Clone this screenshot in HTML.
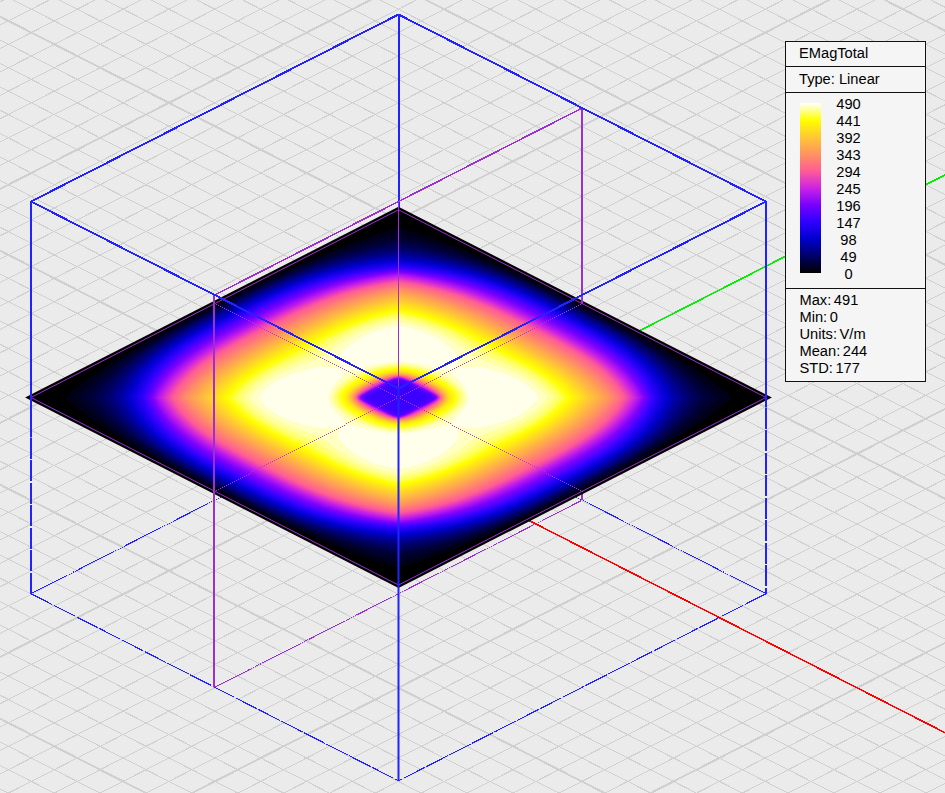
<!DOCTYPE html>
<html><head><meta charset="utf-8"><title>EMagTotal</title>
<style>
html,body{margin:0;padding:0;background:#ebebeb;overflow:hidden}
#v{position:relative;width:945px;height:793px;overflow:hidden;font-family:"Liberation Sans",sans-serif;font-size:14.67px;color:#000}
.lg{position:absolute;left:785px;top:41px;width:139px;height:339px;border:1px solid #111;background:#f5f5f5}
.hl{position:absolute;left:0;width:139px;height:1px;background:#111}
.t{position:absolute;white-space:nowrap;line-height:16px}
  .n{position:absolute;left:32.5px;width:60px;text-align:center;line-height:16px}
.cb{position:absolute;left:14px;top:61px;width:21px;height:170px}
</style></head><body><div id="v">
<svg width="945" height="793" viewBox="0 0 945 793" style="display:block;position:absolute;left:0;top:0">
<rect width="945" height="793" fill="#ebebeb"/>
<path d="M0 -474.79L945 7.29M0 -427.99L945 54.09M0 -404.59L945 77.49M0 1.79L945 -480.29M0 -381.19L945 100.89M0 25.19L945 -456.89M0 -357.79L945 124.29M0 48.59L945 -433.49M0 -334.39L945 147.69M0 71.99L945 -410.09M0 -310.99L945 171.09M0 95.39L945 -386.69M0 -287.59L945 194.49M0 118.79L945 -363.29M0 -264.19L945 217.89M0 142.19L945 -339.89M0 -240.79L945 241.29M0 165.59L945 -316.49M0 -193.99L945 288.09M0 212.39L945 -269.69M0 -170.59L945 311.49M0 235.79L945 -246.29M0 -147.19L945 334.89M0 259.19L945 -222.89M0 -123.79L945 358.29M0 282.59L945 -199.49M0 -100.39L945 381.69M0 305.99L945 -176.09M0 -76.99L945 405.09M0 329.39L945 -152.69M0 -53.59L945 428.49M0 352.79L945 -129.29M0 -30.19L945 451.89M0 376.19L945 -105.89M0 -6.79L945 475.29M0 399.59L945 -82.49M0 40.01L945 522.09M0 446.39L945 -35.69M0 63.41L945 545.49M0 469.79L945 -12.29M0 86.81L945 568.89M0 493.19L945 11.11M0 110.21L945 592.29M0 516.59L945 34.51M0 133.61L945 615.69M0 539.99L945 57.91M0 157.01L945 639.09M0 563.39L945 81.31M0 180.41L945 662.49M0 586.79L945 104.71M0 203.81L945 685.89M0 610.19L945 128.11M0 227.21L945 709.29M0 633.59L945 151.51M0 274.01L945 756.09M0 680.39L945 198.31M0 297.41L945 779.49M0 703.79L945 221.71M0 320.81L945 802.89M0 727.19L945 245.11M0 344.21L945 826.29M0 750.59L945 268.51M0 367.61L945 849.69M0 773.99L945 291.91M0 391.01L945 873.09M0 797.39L945 315.31M0 414.41L945 896.49M0 820.79L945 338.71M0 437.81L945 919.89M0 844.19L945 362.11M0 461.21L945 943.29M0 867.59L945 385.51M0 508.01L945 990.09M0 914.39L945 432.31M0 531.41L945 1013.49M0 937.79L945 455.71M0 554.81L945 1036.89M0 961.19L945 479.11M0 578.21L945 1060.29M0 984.59L945 502.51M0 601.61L945 1083.69M0 1007.99L945 525.91M0 625.01L945 1107.09M0 1031.39L945 549.31M0 648.41L945 1130.49M0 1054.79L945 572.71M0 671.81L945 1153.89M0 1078.19L945 596.11M0 695.21L945 1177.29M0 1101.59L945 619.51M0 742.01L945 1224.09M0 1148.39L945 666.31M0 765.41L945 1247.49M0 1171.79L945 689.71M0 788.81L945 1270.89M0 1195.19L945 713.11M0 1218.59L945 736.51M0 1241.99L945 759.91M0 1265.39L945 783.31" stroke="#d0d0d0" stroke-width="1.0" fill="none" shape-rendering="crispEdges"/>
<path d="M0 -451.39L945 30.69M0 -217.39L945 264.69M0 188.99L945 -293.09M0 16.61L945 498.69M0 422.99L945 -59.09M0 250.61L945 732.69M0 656.99L945 174.91M0 484.61L945 966.69M0 890.99L945 408.91M0 718.61L945 1200.69M0 1124.99L945 642.91" stroke="#d0d0d0" stroke-width="2.0" fill="none" shape-rendering="crispEdges"/>
<line x1="398.30" y1="453.80" x2="955.00" y2="737.79" stroke="#ff0000" stroke-width="1.55" shape-rendering="crispEdges" />
<line x1="398.30" y1="453.80" x2="955.00" y2="169.81" stroke="#00f000" stroke-width="1.6" shape-rendering="crispEdges" />
<line x1="31.00" y1="593.70" x2="398.50" y2="406.50" stroke="#2222ff" stroke-width="1" shape-rendering="crispEdges" stroke-dasharray="40 1 1 1 1 1 1 1 1 1 1 1 1 1"/>
<line x1="766.00" y1="593.70" x2="398.50" y2="406.50" stroke="#2222ff" stroke-width="1" shape-rendering="crispEdges" stroke-dasharray="40 1 1 1 1 1 1 1 1 1 1 1 1 1"/>
<line x1="31.00" y1="593.70" x2="398.50" y2="780.80" stroke="#2222ff" stroke-width="1.1" shape-rendering="crispEdges" stroke-dasharray="24 1.5"/>
<line x1="766.00" y1="593.70" x2="398.50" y2="780.80" stroke="#2222ff" stroke-width="1.1" shape-rendering="crispEdges" stroke-dasharray="24 1.5"/>
<line x1="214.75" y1="687.25" x2="582.25" y2="500.10" stroke="#9a30d0" stroke-width="1" shape-rendering="crispEdges" stroke-dasharray="40 1 1 1 1 1 1 1 1 1 1 1 1 1"/>
<line x1="582.25" y1="108.00" x2="582.25" y2="500.10" stroke="#9a30d0" stroke-width="1.6" shape-rendering="crispEdges" />
<rect x="398" y="14.5" width="2" height="392.0" fill="#2222ff"/>
<polygon points="25.12,397.50 398.50,206.80 771.88,397.50 398.50,588.00" fill="#000" />
<g shape-rendering="geometricPrecision">
<path d="M147.9 341.0L180.1 323.5L235.1 295.3L269.2 278.3L298.0 264.9L324.5 253.4L352.2 242.6L382.3 232.2L397.6 227.5L399.4 227.5L419.2 233.7L439.4 240.6L460.5 248.6L480.9 256.9L500.7 265.6L524.7 276.8L580.3 304.7L634.9 333.1L656.9 345.3L673.9 355.4L690.2 365.8L705.8 376.6L719.4 386.9L731.4 397.1L731.4 397.9L720.6 407.1L709.6 415.6L698.1 423.8L675.2 438.7L649.1 454.0L616.9 471.5L561.9 499.7L527.8 516.7L499.0 530.1L472.5 541.6L444.8 552.4L414.7 562.8L399.4 567.5L397.6 567.5L377.8 561.3L357.6 554.4L336.5 546.4L316.1 538.1L296.3 529.4L272.3 518.2L216.7 490.3L162.1 461.9L140.1 449.7L123.1 439.6L106.8 429.2L91.2 418.4L77.6 408.1L65.6 397.9L65.6 397.1L76.4 387.9L87.4 379.4L98.9 371.2L121.8 356.3Z" fill="#000019" fill-rule="evenodd"/>
<path d="M160.2 336.3L193.9 318.1L252.2 288.4L283.9 273.4L312.2 261.2L331.4 253.8L347.7 248.1L366.6 242.1L384.4 237.1L397.7 233.7L399.3 233.7L408.6 236.0L426.5 240.9L443.7 246.2L462.1 252.5L481.4 259.8L500.0 267.5L516.3 274.8L560.2 296.2L619.7 326.8L640.3 338.2L655.9 347.4L673.5 358.7L687.6 368.7L700.7 379.2L711.7 389.3L719.3 397.1L719.3 397.9L708.5 408.8L694.9 420.6L677.4 433.6L660.0 445.0L636.8 458.7L603.1 476.9L544.8 506.6L513.1 521.6L484.8 533.8L465.6 541.2L449.3 546.9L430.4 552.9L412.6 557.9L399.3 561.3L397.7 561.3L388.4 559.0L370.5 554.1L353.3 548.8L334.9 542.5L315.6 535.2L297.0 527.5L280.7 520.2L236.8 498.8L177.3 468.2L156.7 456.8L141.1 447.6L123.5 436.3L109.4 426.3L96.3 415.8L85.3 405.7L77.7 397.9L77.7 397.1L88.5 386.2L102.1 374.4L119.6 361.4L137.0 350.0Z" fill="#000029" fill-rule="evenodd"/>
<path d="M165.5 335.1L204.6 314.1L242.9 294.6L266.4 283.2L284.1 275.0L302.5 267.2L318.1 261.1L334.3 255.3L351.3 249.9L367.0 245.4L398.5 238.0L413.6 241.3L430.0 245.4L449.6 251.0L468.2 257.2L487.7 264.4L504.6 271.4L524.2 280.2L543.2 289.2L600.0 318.1L637.0 338.3L652.4 347.6L663.1 354.6L673.4 361.9L684.2 370.5L693.2 378.4L701.6 386.6L710.9 397.5L700.6 409.4L687.7 421.6L672.1 434.0L653.8 446.5L631.5 459.9L592.4 480.9L554.1 500.4L530.6 511.8L512.9 520.0L494.5 527.8L478.9 533.9L462.7 539.7L445.7 545.1L430.0 549.6L398.5 557.0L383.4 553.7L367.0 549.6L347.4 544.0L328.8 537.8L309.3 530.6L292.4 523.6L272.8 514.8L253.8 505.8L197.0 476.9L160.0 456.7L144.6 447.4L133.9 440.4L123.6 433.1L112.8 424.5L103.8 416.6L95.4 408.4L86.1 397.5L96.4 385.6L109.3 373.4L124.9 361.0L143.2 348.5Z" fill="#000039" fill-rule="evenodd"/>
<path d="M167.1 335.8L183.3 326.7L204.4 315.6L244.3 295.3L267.8 283.9L287.4 275.1L304.3 268.1L318.5 262.8L337.0 256.6L366.7 248.4L397.0 242.0L400.0 242.0L413.3 244.5L440.5 251.0L456.2 255.5L473.1 260.9L490.9 267.5L509.6 275.1L527.6 283.1L545.0 291.5L600.2 319.6L631.2 336.6L654.5 351.2L666.0 359.4L674.4 366.1L684.5 375.0L691.6 382.3L698.2 389.9L703.2 396.7L703.2 398.3L698.2 405.1L691.6 412.7L685.5 419.0L670.9 431.8L661.0 439.3L651.9 445.6L629.9 459.2L613.7 468.3L592.6 479.4L552.7 499.7L529.2 511.1L509.6 519.9L492.7 526.9L478.5 532.2L460.0 538.4L430.3 546.6L400.0 553.0L397.0 553.0L383.7 550.5L356.5 544.0L340.8 539.5L323.9 534.1L306.1 527.5L287.4 519.9L269.4 511.9L252.0 503.5L196.8 475.4L165.8 458.4L142.5 443.8L131.0 435.6L122.6 428.9L112.5 420.0L105.4 412.7L98.8 405.1L93.8 398.3L93.8 396.7L98.8 389.9L105.4 382.3L111.5 376.0L126.1 363.2L136.0 355.7L145.1 349.4Z" fill="#00004a" fill-rule="evenodd"/>
<path d="M166.3 337.8L183.1 328.2L204.1 317.0L242.4 297.5L267.5 285.3L285.5 277.3L302.5 270.3L318.6 264.5L335.5 259.0L350.4 254.8L365.7 251.0L380.9 247.8L397.3 244.9L399.7 244.9L416.1 247.8L443.7 254.0L459.6 258.4L474.7 263.2L491.0 269.0L508.2 275.9L524.7 283.1L542.2 291.3L591.4 316.2L624.1 333.9L647.6 348.5L657.9 355.8L667.5 363.4L675.3 370.3L682.6 377.6L690.8 387.2L697.4 396.9L697.4 398.1L696.0 400.4L690.8 407.8L684.5 415.3L677.5 422.7L669.8 429.7L661.6 436.4L651.5 443.8L630.7 457.2L613.9 466.8L592.9 478.0L554.6 497.5L529.5 509.7L511.5 517.7L494.5 524.7L478.4 530.5L461.5 536.0L446.6 540.2L431.3 544.0L416.1 547.2L399.7 550.1L397.3 550.1L380.9 547.2L353.3 541.0L337.4 536.6L322.3 531.8L306.0 526.0L288.8 519.1L272.3 511.9L254.8 503.7L205.6 478.8L172.9 461.1L149.4 446.5L139.1 439.2L129.5 431.6L121.7 424.7L114.4 417.4L106.2 407.8L99.6 398.1L99.6 396.9L101.0 394.6L106.2 387.2L112.5 379.7L119.5 372.3L127.2 365.3L135.4 358.6L145.5 351.2Z" fill="#00005a" fill-rule="evenodd"/>
<path d="M190.4 325.5L252.9 293.5L273.7 283.7L292.0 275.9L311.3 268.5L331.8 261.8L351.7 256.4L373.1 251.6L398.5 247.4L400.9 247.7L421.7 251.2L442.1 255.6L463.3 261.3L482.1 267.3L497.1 272.8L511.8 278.7L540.9 292.0L597.8 320.8L614.1 329.6L628.5 338.0L648.6 351.1L657.3 357.6L665.4 364.4L672.9 371.5L679.8 379.0L685.3 386.0L689.7 392.7L692.5 397.5L689.7 402.3L685.3 409.0L679.8 416.0L673.9 422.4L667.6 428.6L656.1 438.3L642.1 448.4L627.0 457.9L606.6 469.5L544.1 501.5L523.3 511.3L505.0 519.1L485.7 526.5L465.2 533.2L445.3 538.6L423.9 543.4L398.5 547.6L396.1 547.3L375.3 543.8L354.9 539.4L333.7 533.7L314.9 527.7L299.9 522.2L285.2 516.3L256.1 503.0L199.2 474.2L182.9 465.4L168.5 457.0L148.4 443.9L139.7 437.4L131.6 430.6L124.1 423.5L117.2 416.0L111.7 409.0L107.3 402.3L104.5 397.5L107.3 392.7L111.7 386.0L117.2 379.0L123.1 372.6L129.4 366.4L140.9 356.7L154.9 346.6L170.0 337.1Z" fill="#00006b" fill-rule="evenodd"/>
<path d="M185.6 329.5L208.1 317.5L246.4 298.0L266.9 288.1L284.9 280.1L303.9 272.6L322.2 266.3L339.8 261.2L358.4 256.7L380.6 252.4L397.3 249.9L399.7 249.9L418.7 252.8L438.6 256.7L457.2 261.2L474.8 266.3L501.8 276.0L531.7 288.8L552.1 298.7L584.4 315.1L618.6 333.6L639.2 346.5L648.2 352.9L656.6 359.5L664.4 366.5L670.6 372.7L676.2 379.2L681.3 386.0L687.0 395.6L687.6 396.9L687.6 398.1L681.3 409.0L673.5 419.1L662.3 430.5L648.2 442.1L631.2 453.8L611.4 465.5L588.9 477.5L550.6 497.0L530.1 506.9L512.1 514.9L493.1 522.4L474.8 528.7L457.2 533.8L438.6 538.3L416.4 542.6L399.7 545.1L397.3 545.1L378.3 542.2L358.4 538.3L339.8 533.8L322.2 528.7L295.2 519.0L265.3 506.2L244.9 496.3L212.6 479.9L178.4 461.4L157.8 448.5L148.8 442.1L140.4 435.5L132.6 428.5L126.4 422.3L120.8 415.8L115.7 409.0L110.0 399.4L109.4 398.1L109.4 396.9L115.7 386.0L123.5 375.9L134.7 364.5L148.8 352.9L165.8 341.2Z" fill="#00007a" fill-rule="evenodd"/>
<path d="M183.5 332.2L204.8 320.5L241.5 301.7L263.4 291.0L281.3 283.0L300.2 275.4L318.3 269.0L337.8 263.3L354.3 259.3L376.5 255.0L399.0 251.9L418.2 254.6L436.2 257.9L453.2 261.7L473.0 267.2L486.1 271.5L500.4 276.7L528.8 288.8L546.2 297.1L570.8 309.5L595.2 322.1L611.5 331.0L632.4 343.7L641.6 350.0L650.2 356.6L658.2 363.4L664.5 369.6L670.2 376.0L674.6 381.6L679.9 389.8L683.8 397.7L679.2 406.4L673.7 414.5L668.4 421.1L662.4 427.5L650.2 438.4L633.8 450.4L613.5 462.8L592.2 474.5L555.5 493.3L533.6 504.0L515.7 512.0L496.8 519.6L478.7 526.0L459.2 531.7L442.7 535.7L420.5 540.0L398.0 543.1L378.8 540.4L360.8 537.1L343.8 533.3L324.0 527.8L310.9 523.5L296.6 518.3L268.2 506.2L250.8 497.9L226.2 485.5L201.8 472.9L185.5 464.0L164.6 451.3L155.4 445.0L146.8 438.4L138.8 431.6L132.5 425.4L126.8 419.0L122.4 413.4L117.1 405.2L113.2 397.3L117.8 388.6L123.3 380.5L128.6 373.9L134.6 367.5L146.8 356.6L163.2 344.6Z" fill="#00008a" fill-rule="evenodd"/>
<path d="M181.9 334.5L203.1 322.8L236.6 305.5L259.9 293.9L279.4 285.1L296.4 278.1L312.5 272.3L331.6 266.4L347.9 262.3L372.1 257.4L398.6 253.7L417.9 256.3L436.1 259.5L453.2 263.3L469.3 267.6L484.5 272.3L497.1 276.8L511.0 282.3L525.8 288.7L557.3 303.9L604.3 328.4L625.6 341.0L634.9 347.2L643.7 353.6L651.9 360.4L658.4 366.4L664.4 372.8L668.9 378.3L675.2 387.6L680.2 397.5L676.6 405.0L673.0 411.0L668.0 417.8L662.5 424.4L650.8 435.6L642.5 442.3L634.9 447.8L615.1 460.5L593.9 472.2L560.4 489.5L537.1 501.1L517.6 509.9L500.6 516.9L484.5 522.7L465.4 528.6L449.1 532.7L424.9 537.6L398.4 541.3L379.1 538.7L360.9 535.5L343.8 531.7L327.7 527.4L312.5 522.7L299.9 518.2L286.0 512.7L271.2 506.3L239.7 491.1L192.7 466.6L171.4 454.0L162.1 447.8L153.3 441.4L145.1 434.6L138.6 428.6L132.6 422.2L128.1 416.7L121.8 407.4L116.8 397.5L120.4 390.0L124.0 384.0L129.0 377.2L134.5 370.6L146.2 359.4L154.5 352.7L162.1 347.2Z" fill="#000099" fill-rule="evenodd"/>
<path d="M180.4 336.9L196.9 327.4L219.5 315.5L253.3 298.4L275.7 287.9L292.5 280.9L310.3 274.3L327.4 269.0L343.6 264.7L356.3 261.9L372.1 259.0L386.4 256.9L399.0 255.5L417.9 257.9L434.0 260.6L451.4 264.2L465.6 267.9L479.2 271.9L493.9 276.9L507.9 282.2L521.3 287.9L551.4 302.2L598.6 326.6L621.6 339.9L638.6 351.6L646.9 358.2L653.5 364.2L659.6 370.5L664.2 376.0L671.4 386.4L676.7 397.3L675.0 401.8L671.6 408.2L667.6 414.5L662.4 421.2L656.6 427.7L650.3 433.8L642.2 440.6L634.8 446.2L616.6 458.1L600.1 467.6L577.5 479.5L543.7 496.6L521.3 507.1L504.5 514.1L486.7 520.7L469.6 526.0L453.4 530.3L440.7 533.1L424.9 536.0L410.6 538.1L398.0 539.5L379.1 537.1L363.0 534.4L345.6 530.8L331.4 527.1L317.8 523.1L303.1 518.1L289.1 512.8L275.7 507.1L245.6 492.8L198.4 468.4L175.4 455.1L158.4 443.4L150.1 436.8L143.5 430.8L137.4 424.5L132.8 419.0L125.6 408.6L120.3 397.7L122.0 393.2L125.4 386.8L129.4 380.5L134.6 373.8L140.4 367.3L146.7 361.2L154.8 354.4L162.2 348.8Z" fill="#0000a9" fill-rule="evenodd"/>
<path d="M205.1 324.3L240.6 306.0L262.4 295.2L281.9 286.4L299.1 279.5L319.3 272.7L337.0 267.6L356.1 263.3L376.7 259.7L399.1 257.1L427.4 260.8L445.3 264.2L464.0 268.7L481.5 273.8L499.6 280.2L524.9 290.7L553.3 304.4L597.4 327.2L610.5 334.6L623.0 342.3L639.5 354.2L646.5 360.0L652.9 366.1L657.8 371.4L663.1 378.1L667.0 383.9L670.9 391.2L673.5 397.8L670.4 405.0L667.0 411.1L662.3 418.0L657.8 423.6L651.9 429.9L640.7 439.9L627.0 450.0L611.9 459.5L591.9 470.7L556.4 489.0L534.6 499.8L515.1 508.6L497.9 515.5L477.7 522.3L460.0 527.4L440.9 531.7L420.3 535.3L397.9 537.9L369.6 534.2L351.7 530.8L333.0 526.3L315.5 521.2L297.4 514.8L272.1 504.3L243.7 490.6L199.6 467.8L186.5 460.4L174.0 452.7L157.5 440.8L150.5 435.0L144.1 428.9L139.2 423.6L133.9 416.9L130.0 411.1L126.1 403.8L123.5 397.2L126.6 390.0L130.0 383.9L134.7 377.0L139.2 371.4L145.1 365.1L156.3 355.1L170.0 345.0L185.1 335.5Z" fill="#0000b9" fill-rule="evenodd"/>
<path d="M196.8 330.0L217.3 319.1L252.6 301.2L271.7 292.1L288.3 285.0L305.8 278.3L322.7 272.8L340.8 268.0L360.2 263.8L383.7 260.2L398.1 258.6L400.8 258.8L423.0 261.5L443.5 265.1L464.4 270.0L485.7 276.4L510.4 285.6L536.5 297.3L584.2 321.5L612.1 336.9L629.5 348.4L643.9 359.8L650.2 365.9L655.1 371.2L659.5 376.8L664.2 383.8L668.1 391.2L670.7 397.7L665.6 408.8L662.0 414.7L657.8 420.4L653.2 425.9L647.1 432.2L634.5 442.9L619.0 453.8L600.2 465.0L579.7 475.9L544.4 493.8L525.3 502.9L508.7 510.0L491.2 516.7L474.3 522.2L456.2 527.0L436.8 531.2L413.3 534.8L398.9 536.4L396.2 536.2L374.0 533.5L353.5 529.9L332.6 525.0L311.3 518.6L286.6 509.4L260.5 497.7L212.8 473.5L184.9 458.1L167.5 446.6L153.1 435.2L146.8 429.1L141.9 423.8L137.5 418.2L132.8 411.2L128.9 403.8L126.3 397.3L131.4 386.2L135.0 380.3L139.2 374.6L143.8 369.1L149.9 362.8L162.5 352.1L178.0 341.2Z" fill="#0000c8" fill-rule="evenodd"/>
<path d="M192.5 333.8L212.5 322.9L247.6 304.8L268.0 294.9L284.5 287.7L301.8 280.9L318.4 275.3L336.1 270.3L353.1 266.4L376.0 262.5L398.5 259.9L418.6 262.2L439.5 265.6L458.8 269.8L478.6 275.3L504.0 284.2L529.0 294.9L573.9 317.3L603.7 333.4L621.7 344.5L636.7 355.6L648.7 366.7L653.5 372.1L658.6 378.9L664.2 388.5L668.0 397.5L664.2 406.5L659.4 415.0L655.2 420.7L650.6 426.2L644.5 432.4L637.9 438.4L623.0 449.6L604.5 461.2L584.5 472.1L549.4 490.2L529.0 500.1L512.5 507.3L495.2 514.1L478.6 519.7L460.9 524.7L443.9 528.6L421.0 532.5L398.5 535.1L378.4 532.8L357.5 529.4L338.2 525.2L318.4 519.7L293.0 510.8L268.0 500.1L223.1 477.7L193.3 461.6L175.3 450.5L160.3 439.4L148.3 428.3L143.5 422.9L138.4 416.1L132.8 406.5L129.0 397.5L132.8 388.5L137.6 380.0L141.8 374.3L146.4 368.8L152.5 362.6L159.1 356.6L174.0 345.4Z" fill="#0500d2" fill-rule="evenodd"/>
<path d="M189.9 336.7L209.2 325.9L238.1 310.9L261.3 299.3L280.7 290.5L297.8 283.5L314.1 277.8L331.5 272.6L348.2 268.6L373.1 264.1L399.0 261.2L419.1 263.5L437.8 266.4L457.3 270.6L473.4 274.9L486.6 279.0L499.2 283.5L524.5 294.1L554.3 308.6L596.7 330.7L616.4 342.5L631.8 353.5L644.1 364.4L650.0 370.7L654.4 376.3L661.1 387.0L665.5 397.2L663.5 403.0L659.7 410.5L655.2 417.6L650.9 423.2L646.2 428.6L639.9 434.7L633.0 440.6L625.6 446.2L607.1 458.3L587.8 469.1L558.9 484.1L535.7 495.7L516.3 504.5L499.2 511.5L482.9 517.2L465.5 522.4L448.8 526.4L423.9 530.9L398.0 533.8L377.9 531.5L359.2 528.6L339.7 524.4L323.6 520.1L310.4 516.0L297.8 511.5L272.5 500.9L242.7 486.4L200.3 464.3L180.6 452.5L165.2 441.5L152.9 430.6L147.0 424.3L142.6 418.7L135.9 408.0L131.5 397.8L133.5 392.0L137.3 384.5L141.8 377.4L146.1 371.8L150.8 366.4L157.1 360.3L164.0 354.4L171.4 348.8Z" fill="#0c00da" fill-rule="evenodd"/>
<path d="M187.9 339.3L203.0 330.5L224.0 319.3L256.2 303.0L278.6 292.5L295.5 285.5L311.7 279.7L327.0 275.0L343.3 270.8L356.3 268.1L372.4 265.4L389.6 263.2L399.6 262.5L417.3 264.4L436.2 267.3L451.6 270.4L468.0 274.5L492.6 282.2L518.4 292.5L545.4 305.3L589.6 328.1L611.1 340.6L626.8 351.3L639.5 362.0L645.7 368.3L650.3 373.7L654.4 379.4L658.0 385.4L661.0 391.7L663.0 396.9L662.5 399.4L659.3 407.1L655.9 413.2L652.0 419.0L646.6 425.7L640.6 432.0L634.0 438.0L626.8 443.7L617.9 450.1L609.1 455.7L594.0 464.5L573.0 475.7L540.8 492.0L518.4 502.5L501.5 509.5L485.3 515.3L470.0 520.0L453.7 524.2L440.7 526.9L424.6 529.6L407.4 531.8L397.4 532.5L379.7 530.6L360.8 527.7L345.4 524.6L329.0 520.5L304.4 512.8L278.6 502.5L251.6 489.7L207.4 466.9L185.9 454.4L170.2 443.7L157.5 433.0L151.3 426.7L146.7 421.3L142.6 415.6L139.0 409.6L136.0 403.3L134.0 398.1L134.5 395.6L137.7 387.9L141.1 381.8L145.0 376.0L150.4 369.3L156.4 363.0L163.0 357.0L170.2 351.3L179.1 344.9Z" fill="#1300e2" fill-rule="evenodd"/>
<path d="M207.0 329.6L228.2 318.4L260.5 302.1L278.2 293.9L295.0 286.8L313.0 280.4L330.4 275.2L349.1 270.7L367.0 267.3L381.4 265.3L397.4 263.6L415.6 265.3L434.6 268.1L454.3 272.1L472.6 276.8L491.4 282.9L513.9 291.7L539.6 303.6L584.0 326.3L608.5 340.3L625.5 352.0L638.1 362.7L647.9 373.4L652.0 379.1L655.6 385.1L659.2 392.6L660.8 396.9L660.8 398.1L658.1 405.0L655.0 411.2L651.2 417.1L647.0 422.7L637.1 433.3L624.3 444.0L608.5 454.7L590.0 465.4L568.8 476.6L536.5 492.9L518.8 501.1L502.0 508.2L484.0 514.6L466.6 519.8L447.9 524.3L430.0 527.7L415.6 529.7L399.6 531.4L381.4 529.7L362.4 526.9L342.7 522.9L324.4 518.2L305.6 512.1L283.1 503.3L257.4 491.4L213.0 468.7L188.5 454.7L171.5 443.0L158.9 432.3L149.1 421.6L145.0 415.9L141.4 409.9L137.8 402.4L136.2 398.1L136.2 396.9L138.9 390.0L142.0 383.8L145.8 377.9L150.0 372.3L159.9 361.7L172.7 351.0L188.5 340.3Z" fill="#1a00ea" fill-rule="evenodd"/>
<path d="M201.0 334.2L220.2 323.7L253.9 306.5L271.2 298.1L287.7 290.9L303.3 284.8L319.9 279.2L337.8 274.3L354.9 270.5L375.8 267.1L398.5 264.6L421.2 267.1L442.1 270.5L461.2 274.8L480.9 280.4L504.2 288.8L529.0 299.6L572.2 321.3L598.9 335.8L616.7 347.1L630.2 357.4L636.8 363.4L641.8 368.7L646.4 374.1L650.5 379.9L655.2 388.4L658.8 397.5L655.2 406.6L649.7 416.3L645.5 422.0L640.9 427.4L635.7 432.6L629.0 438.6L614.1 449.7L596.0 460.8L576.8 471.3L543.1 488.5L525.8 496.9L509.3 504.1L493.7 510.2L477.1 515.8L459.2 520.7L442.1 524.5L421.2 527.9L398.5 530.4L375.8 527.9L354.9 524.5L335.8 520.2L316.1 514.6L292.8 506.2L268.0 495.4L224.8 473.7L198.1 459.2L180.3 447.9L166.8 437.6L160.2 431.6L155.2 426.3L150.6 420.9L146.5 415.1L141.8 406.6L138.2 397.5L141.8 388.4L147.3 378.7L151.5 373.0L156.1 367.6L161.3 362.4L168.0 356.4L182.9 345.3Z" fill="#2100f2" fill-rule="evenodd"/>
<path d="M197.4 337.6L216.9 326.7L247.4 311.0L267.6 301.0L285.5 292.9L301.0 286.8L317.4 281.1L333.1 276.5L349.8 272.6L374.9 268.2L389.8 266.4L399.4 265.7L419.7 267.9L438.4 270.8L455.7 274.5L473.8 279.3L497.8 287.4L523.0 298.0L560.3 316.5L593.4 334.0L611.5 345.0L625.4 355.2L632.2 361.0L637.5 366.2L642.3 371.5L646.6 377.1L652.4 386.7L656.7 397.0L656.7 398.0L654.7 403.2L650.4 412.0L646.6 417.9L642.3 423.5L637.5 428.8L631.1 435.0L624.2 440.8L616.7 446.4L599.6 457.4L580.1 468.3L549.6 484.0L529.4 494.0L511.5 502.1L496.0 508.2L479.6 513.9L463.9 518.5L447.2 522.4L422.1 526.8L407.2 528.6L397.6 529.3L377.3 527.1L358.6 524.2L341.3 520.5L323.2 515.7L299.2 507.6L274.0 497.0L236.7 478.5L203.6 461.0L185.5 450.0L171.6 439.8L164.8 434.0L159.5 428.8L154.7 423.5L150.4 417.9L144.6 408.3L140.3 398.0L140.3 397.0L142.3 391.8L146.6 383.0L150.4 377.1L154.7 371.5L159.5 366.2L165.9 360.0L172.8 354.2L180.3 348.6Z" fill="#2800fa" fill-rule="evenodd"/>
<path d="M195.0 340.3L210.6 331.3L231.7 320.2L262.5 304.6L283.4 295.0L298.7 288.7L314.9 282.9L330.4 278.3L346.9 274.2L371.6 269.7L388.8 267.5L399.5 266.7L418.1 268.7L434.7 271.2L452.3 274.7L468.6 278.8L493.0 286.7L516.9 296.4L543.8 309.3L586.4 331.3L604.9 342.2L620.5 353.0L633.1 363.7L638.1 369.0L642.7 374.5L646.7 380.2L650.3 386.2L654.8 397.0L654.8 398.0L653.7 401.1L650.3 408.8L646.7 414.8L642.7 420.5L638.1 426.0L632.0 432.3L625.3 438.2L618.0 443.9L602.0 454.7L586.4 463.7L565.3 474.8L534.5 490.4L513.6 500.0L498.3 506.3L482.1 512.1L466.6 516.7L450.1 520.8L425.4 525.3L408.2 527.5L397.5 528.3L378.9 526.3L362.3 523.8L344.7 520.3L328.4 516.2L304.0 508.3L280.1 498.6L253.2 485.7L210.6 463.7L192.1 452.8L176.5 442.0L163.9 431.3L158.9 426.0L154.3 420.5L150.3 414.8L146.7 408.8L142.2 398.0L142.2 397.0L143.3 393.9L146.7 386.2L150.3 380.2L154.3 374.5L158.9 369.0L165.0 362.7L171.7 356.8L179.0 351.1Z" fill="#3100ff" fill-rule="evenodd"/>
<path d="M216.8 329.3L268.4 303.0L286.3 294.9L301.7 288.7L320.0 282.4L337.7 277.4L354.7 273.5L373.0 270.4L398.1 267.5L424.0 270.4L442.3 273.5L459.3 277.4L477.0 282.4L495.3 288.7L517.3 297.8L542.6 309.9L582.2 330.3L595.3 337.7L606.4 344.5L621.7 355.5L628.6 361.3L633.9 366.5L638.7 371.8L643.0 377.4L646.8 383.3L650.1 389.5L653.1 397.3L651.7 401.7L648.8 408.0L645.4 414.1L641.4 419.9L635.8 426.4L625.2 436.6L613.0 446.0L598.1 455.6L580.2 465.7L528.6 492.0L510.7 500.1L495.3 506.3L477.0 512.6L459.3 517.6L442.3 521.5L424.0 524.6L398.9 527.5L373.0 524.6L354.7 521.5L337.7 517.6L320.0 512.6L301.7 506.3L279.7 497.2L254.4 485.1L214.8 464.7L201.7 457.3L190.6 450.5L175.3 439.5L168.4 433.7L163.1 428.5L158.3 423.2L154.0 417.6L150.2 411.7L146.9 405.5L143.9 397.7L145.3 393.3L148.2 387.0L151.6 380.9L155.6 375.1L161.2 368.6L171.8 358.4L184.0 349.0L198.9 339.4Z" fill="#3c00ff" fill-rule="evenodd"/>
<path d="M209.6 334.4L228.1 324.6L261.8 307.4L279.3 299.1L294.2 292.7L310.1 286.7L327.0 281.3L343.1 277.0L360.5 273.3L386.6 269.5L397.2 268.4L402.8 268.7L422.6 271.1L443.2 274.6L462.1 279.1L481.4 284.8L502.8 292.7L527.3 303.6L572.0 326.1L596.9 340.0L613.0 350.5L626.2 361.0L636.5 371.4L640.9 376.9L644.8 382.8L649.3 391.4L651.4 396.8L651.4 398.2L646.9 408.6L640.9 418.1L636.5 423.6L631.6 428.9L620.1 439.1L605.2 449.8L587.4 460.6L568.9 470.4L535.2 487.6L517.7 495.9L502.8 502.3L486.9 508.3L470.0 513.7L453.9 518.0L436.5 521.7L410.4 525.5L399.8 526.6L394.2 526.3L374.4 523.9L353.8 520.4L334.9 515.9L315.6 510.2L294.2 502.3L269.7 491.4L225.0 468.9L200.1 455.0L184.0 444.5L170.8 434.0L160.5 423.6L156.1 418.1L152.2 412.2L147.7 403.6L145.6 398.2L145.6 396.8L150.1 386.4L156.1 376.9L160.5 371.4L165.4 366.1L176.9 355.9L191.8 345.2ZM370.7 395.8L369.6 396.8L369.6 398.2L370.7 399.2L392.0 410.2L397.2 412.2L400.4 412.1L403.4 410.9L426.3 399.2L427.4 398.2L427.4 396.8L426.3 395.8L405.0 384.8L399.8 382.8L396.6 382.9L393.6 384.1Z" fill="#4800ff" fill-rule="evenodd"/>
<path d="M206.1 337.8L224.8 327.6L258.4 310.4L275.7 302.0L292.1 294.7L307.7 288.6L322.5 283.6L338.2 279.2L355.1 275.3L378.0 271.4L398.9 269.1L419.0 271.4L437.5 274.4L456.8 278.6L474.5 283.6L497.7 291.8L521.3 302.0L563.1 322.8L590.0 337.3L606.6 347.6L621.5 358.7L632.3 368.8L637.0 374.2L641.3 379.9L646.2 388.3L650.0 397.3L646.8 405.5L642.0 413.9L637.9 419.7L633.3 425.1L622.7 435.3L615.5 441.1L607.9 446.6L590.9 457.2L572.2 467.4L538.6 484.6L521.3 493.0L504.9 500.3L489.3 506.4L474.5 511.4L458.8 515.8L441.9 519.7L419.0 523.6L398.1 525.9L378.0 523.6L359.5 520.6L340.2 516.4L322.5 511.4L299.3 503.2L275.7 493.0L233.9 472.2L207.0 457.7L190.4 447.4L175.5 436.3L164.7 426.2L160.0 420.8L155.7 415.1L150.8 406.7L147.0 397.7L150.2 389.5L155.0 381.1L159.1 375.3L163.7 369.9L174.3 359.7L181.5 353.9L189.1 348.4ZM366.3 395.1L364.5 397.4L365.2 398.8L366.3 399.9L392.3 413.2L394.0 414.0L398.2 414.8L401.1 414.5L404.7 413.2L430.7 399.9L432.5 397.6L431.8 396.2L430.7 395.1L404.7 381.8L403.0 381.0L398.8 380.2L395.9 380.5L392.3 381.8Z" fill="#5400ff" fill-rule="evenodd"/>
<path d="M204.1 340.4L223.1 329.8L250.5 315.7L270.6 305.7L288.4 297.5L303.7 291.3L320.0 285.5L335.4 280.9L352.0 276.8L376.9 272.3L391.6 270.5L399.7 269.9L417.7 272.0L434.0 274.6L451.4 278.3L467.5 282.6L491.5 290.6L515.2 300.4L543.5 314.1L584.3 335.5L602.6 346.5L617.9 357.4L629.0 367.4L633.9 372.7L638.4 378.2L644.3 387.7L648.4 396.9L648.4 398.1L646.8 402.3L642.3 410.9L638.4 416.8L633.9 422.3L623.7 432.7L610.5 443.2L592.9 454.6L573.9 465.2L546.5 479.3L526.4 489.3L508.6 497.5L493.3 503.7L477.0 509.5L461.6 514.1L445.0 518.2L420.1 522.7L405.4 524.5L397.3 525.1L379.3 523.0L363.0 520.4L345.6 516.7L329.5 512.4L305.5 504.4L281.8 494.6L253.5 480.9L212.7 459.5L194.4 448.5L179.1 437.6L168.0 427.6L163.1 422.3L158.6 416.8L152.7 407.3L148.6 398.1L148.6 396.9L150.2 392.7L154.7 384.1L158.6 378.2L163.1 372.7L173.3 362.3L186.5 351.8ZM363.2 396.7L363.2 398.3L367.1 401.0L390.0 412.8L397.1 415.5L400.1 415.5L405.4 413.5L428.5 401.8L433.8 398.3L433.8 396.7L429.9 394.0L407.0 382.2L399.9 379.5L396.9 379.5L391.6 381.5L368.5 393.2Z" fill="#5f00ff" fill-rule="evenodd"/>
<path d="M203.3 342.4L219.9 332.9L241.1 321.8L268.8 307.9L289.7 298.2L305.0 291.9L319.4 286.8L334.7 282.1L350.7 278.1L375.8 273.3L399.0 270.6L416.5 272.6L432.7 275.3L448.0 278.4L464.2 282.7L488.4 290.6L512.2 300.4L539.0 313.3L581.5 335.3L599.9 346.3L614.2 356.2L626.7 367.0L631.7 372.2L636.3 377.7L642.4 387.1L647.1 397.2L645.5 401.7L642.4 407.9L638.7 413.8L634.5 419.5L629.8 424.9L623.5 431.1L610.4 441.6L593.7 452.6L577.1 462.1L555.9 473.2L528.2 487.1L507.3 496.8L492.0 503.1L477.6 508.2L462.3 512.9L446.3 516.9L421.2 521.7L398.0 524.4L380.5 522.4L364.3 519.7L349.0 516.6L332.8 512.3L308.6 504.4L284.8 494.6L258.0 481.7L215.5 459.7L197.1 448.7L182.8 438.8L170.3 428.0L165.3 422.8L160.7 417.3L154.6 407.9L149.9 397.8L151.5 393.3L154.6 387.1L158.3 381.2L162.5 375.5L167.2 370.1L173.5 363.9L186.6 353.4ZM367.9 392.8L365.0 394.4L362.7 396.4L362.2 397.7L363.7 399.6L366.6 401.5L389.3 413.1L392.5 414.6L396.4 415.8L399.0 416.0L404.5 414.6L429.1 402.2L432.0 400.6L434.3 398.6L434.8 397.3L433.3 395.4L430.4 393.5L407.7 381.9L404.5 380.4L400.6 379.2L398.0 379.0L392.5 380.4Z" fill="#6b00ff" fill-rule="evenodd"/>
<path d="M203.3 343.9L218.4 335.2L236.4 325.7L267.1 310.1L287.8 300.4L302.9 294.0L318.5 288.3L334.1 283.3L348.3 279.6L361.1 276.8L374.7 274.3L389.1 272.3L399.4 271.4L415.2 273.3L429.2 275.5L444.5 278.6L458.9 282.2L470.6 285.7L483.5 290.0L507.5 299.6L533.0 311.7L575.7 333.6L595.8 345.2L611.6 356.0L624.3 366.7L629.4 371.9L634.1 377.3L640.5 386.5L645.6 397.0L644.9 399.8L641.9 406.0L638.3 412.0L634.1 417.7L628.9 423.7L623.2 429.4L610.3 440.0L593.7 451.1L578.6 459.8L560.6 469.3L529.9 484.9L509.2 494.6L494.1 501.0L478.5 506.7L462.9 511.7L448.7 515.4L435.9 518.2L422.3 520.7L407.9 522.7L397.6 523.6L381.8 521.7L367.8 519.5L352.5 516.4L338.1 512.8L326.4 509.3L313.5 505.0L289.5 495.4L264.0 483.3L221.3 461.4L201.2 449.8L185.4 439.0L172.7 428.3L167.6 423.1L162.9 417.7L156.5 408.5L151.4 398.0L152.1 395.2L155.1 389.0L158.7 383.0L162.9 377.3L168.1 371.3L173.8 365.6L186.7 355.0ZM363.2 395.1L362.2 396.2L361.5 397.6L362.9 399.7L364.6 400.8L390.5 414.1L394.3 415.7L398.3 416.4L402.7 415.7L406.5 414.1L433.8 399.9L434.8 398.8L435.5 397.4L434.1 395.3L432.4 394.2L406.5 380.9L402.7 379.3L398.7 378.6L394.3 379.3L390.5 380.9Z" fill="#7700ff" fill-rule="evenodd"/>
<path d="M203.8 345.2L218.3 336.8L234.8 328.0L267.0 311.6L287.6 301.8L302.7 295.4L318.5 289.5L333.6 284.6L347.5 280.8L360.2 277.9L373.6 275.4L387.8 273.2L399.3 272.0L414.0 273.9L427.9 276.2L441.1 278.8L455.6 282.4L467.3 285.8L480.3 290.1L504.4 299.6L530.0 311.6L571.2 332.8L591.6 344.3L607.6 354.8L620.8 365.3L627.1 371.5L631.9 376.9L639.2 387.2L644.3 397.1L644.3 397.9L641.3 404.2L637.8 410.2L633.7 415.9L629.1 421.4L622.9 427.6L610.2 438.3L593.2 449.8L578.7 458.2L562.2 467.0L530.0 483.4L509.4 493.2L494.3 499.6L478.5 505.5L463.4 510.4L449.5 514.2L436.8 517.1L423.4 519.6L409.2 521.8L397.7 523.0L383.0 521.1L369.1 518.8L355.9 516.2L341.4 512.6L329.7 509.2L316.7 504.9L292.6 495.4L267.0 483.4L225.8 462.2L205.4 450.7L189.4 440.2L176.2 429.7L169.9 423.5L165.1 418.1L157.8 407.8L152.7 397.9L152.7 397.1L155.7 390.8L159.2 384.8L163.3 379.1L167.9 373.6L174.1 367.4L186.8 356.7ZM361.7 395.9L361.1 397.2L361.6 399.0L365.7 401.7L390.2 414.3L395.4 416.3L397.8 416.6L401.6 416.3L406.8 414.3L429.8 402.6L435.3 399.1L435.9 397.8L435.4 396.0L431.3 393.3L406.8 380.7L401.6 378.7L399.2 378.4L395.4 378.7L390.2 380.7L367.2 392.4Z" fill="#8405fb" fill-rule="evenodd"/>
<path d="M204.5 346.4L218.3 338.4L234.8 329.5L266.9 313.1L287.5 303.3L302.4 296.8L318.1 290.8L333.0 285.9L346.8 282.0L372.6 276.4L389.0 273.8L399.1 272.8L412.8 274.5L426.7 276.8L452.2 282.5L464.0 285.9L477.1 290.2L489.5 294.8L503.0 300.4L528.5 312.4L569.8 333.5L590.1 345.0L606.2 355.6L619.4 366.0L625.7 372.2L630.6 377.5L637.3 386.6L642.9 397.2L642.5 398.6L640.1 403.6L636.5 409.6L632.4 415.3L627.7 420.7L621.6 426.9L608.7 437.6L592.5 448.6L578.7 456.6L562.2 465.5L530.1 481.9L509.5 491.7L494.6 498.2L478.9 504.2L464.0 509.1L450.2 513.0L424.4 518.6L408.0 521.2L397.9 522.2L384.2 520.5L370.3 518.2L344.8 512.5L333.0 509.1L319.9 504.8L307.5 500.2L294.0 494.6L268.5 482.6L227.2 461.5L206.9 450.0L190.8 439.4L177.6 429.0L171.3 422.8L166.4 417.5L159.7 408.4L154.1 397.8L154.5 396.4L156.9 391.4L160.5 385.4L164.6 379.7L169.3 374.3L175.4 368.1L188.3 357.4ZM361.4 395.8L360.7 396.9L360.9 398.6L365.4 401.9L389.9 414.4L395.1 416.4L397.4 416.8L401.9 416.4L407.1 414.4L428.7 403.5L435.6 399.2L436.3 398.1L436.1 396.4L431.6 393.1L407.1 380.6L401.9 378.6L399.6 378.2L395.1 378.6L389.9 380.6L368.3 391.5Z" fill="#910af7" fill-rule="evenodd"/>
<path d="M241.3 327.7L269.9 313.1L288.9 304.0L307.2 296.2L323.2 290.3L340.2 284.9L358.6 280.2L378.4 276.3L397.6 273.5L409.2 274.8L425.4 277.5L438.4 280.2L452.8 283.8L466.4 287.8L479.2 292.2L504.8 302.6L528.6 313.9L568.3 334.3L587.3 344.9L602.2 354.5L615.7 364.8L626.4 375.0L631.1 380.4L635.2 386.1L638.9 392.1L641.3 397.0L640.8 399.2L637.5 405.4L631.1 414.6L623.4 423.2L613.4 432.2L602.2 440.5L590.1 448.4L575.7 456.7L555.7 467.3L527.1 481.9L508.1 491.0L489.8 498.8L473.8 504.7L456.8 510.1L438.4 514.8L418.6 518.7L399.4 521.5L387.8 520.2L371.6 517.5L358.6 514.8L344.2 511.2L330.6 507.2L317.8 502.8L292.2 492.4L268.4 481.1L228.7 460.7L209.7 450.1L194.8 440.5L181.3 430.2L170.6 420.0L165.9 414.6L161.8 408.9L158.1 402.9L155.7 398.0L156.2 395.8L159.5 389.6L165.9 380.4L173.6 371.8L183.6 362.8L194.8 354.5L206.9 346.6L221.3 338.3ZM360.2 396.7L360.2 398.3L361.1 399.4L366.5 402.9L387.9 413.8L393.0 416.0L397.0 417.0L400.0 417.0L402.2 416.6L409.1 413.8L430.5 402.9L434.7 400.3L436.8 398.3L436.8 396.7L435.9 395.6L430.5 392.1L409.1 381.2L404.0 379.0L400.0 378.0L397.0 378.0L394.8 378.4L387.9 381.2L366.5 392.1L362.3 394.7Z" fill="#9f10f3" fill-rule="evenodd"/>
<path d="M231.9 334.0L282.3 308.5L298.5 301.1L313.8 294.9L330.1 289.1L347.5 283.9L366.3 279.4L384.3 276.2L399.0 274.2L424.1 278.1L439.2 281.3L453.5 285.0L468.8 289.7L483.2 294.9L505.0 304.0L530.3 316.2L571.4 337.4L594.2 350.8L609.6 361.6L622.0 372.5L627.0 377.8L631.5 383.3L635.5 389.1L638.9 395.2L640.0 397.7L636.9 403.5L633.6 408.8L626.0 418.3L616.6 427.6L607.2 435.2L595.5 443.4L581.6 451.9L565.1 461.0L514.7 486.5L498.5 493.9L483.2 500.1L466.9 505.9L449.5 511.1L430.7 515.6L412.7 518.8L398.0 520.8L372.9 516.9L357.8 513.7L343.5 510.0L328.2 505.3L313.8 500.1L292.0 491.0L266.7 478.8L225.6 457.6L202.8 444.2L187.4 433.4L175.0 422.5L170.0 417.2L165.5 411.7L161.5 405.9L158.1 399.8L157.0 397.3L160.1 391.5L163.4 386.2L171.0 376.7L180.4 367.4L189.8 359.8L201.5 351.6L215.4 343.1ZM364.7 392.8L360.9 395.5L359.8 396.9L359.9 398.4L362.0 400.5L367.7 403.9L386.0 413.2L392.7 416.1L396.7 417.2L400.3 417.2L406.6 415.3L432.3 402.2L436.1 399.5L437.2 398.1L437.1 396.6L435.0 394.5L429.3 391.1L411.0 381.8L404.3 378.9L400.3 377.8L396.7 377.8L390.4 379.7Z" fill="#ac15ef" fill-rule="evenodd"/>
<path d="M226.5 338.3L277.4 312.2L294.9 304.0L310.0 297.6L325.9 291.6L340.9 286.8L357.0 282.5L374.2 278.8L397.6 275.1L401.8 275.4L420.6 278.4L437.9 282.0L454.1 286.3L471.1 291.6L493.8 300.4L516.5 310.7L561.0 333.3L585.9 347.2L602.1 357.7L615.3 368.1L621.8 374.2L626.6 379.5L631.0 385.1L634.9 390.9L638.3 397.0L638.3 398.0L634.9 404.1L631.0 409.9L626.6 415.5L621.8 420.8L611.9 429.8L599.5 439.1L585.9 447.8L570.5 456.7L519.6 482.8L502.1 491.0L487.0 497.4L471.1 503.4L456.1 508.2L440.0 512.5L422.8 516.2L399.4 519.9L395.2 519.6L376.4 516.6L359.1 513.0L342.9 508.7L325.9 503.4L303.2 494.6L280.5 484.3L236.0 461.7L211.1 447.8L194.9 437.3L181.7 426.9L175.2 420.8L170.4 415.5L166.0 409.9L162.1 404.1L158.7 398.0L158.7 397.0L162.1 390.9L166.0 385.1L170.4 379.5L175.2 374.2L185.1 365.2L197.5 355.9L211.1 347.2ZM361.7 394.4L359.7 396.4L359.4 397.8L360.6 399.7L363.1 401.5L371.9 406.4L387.3 414.1L392.4 416.3L397.8 417.5L402.7 416.9L408.0 414.9L426.6 405.6L435.3 400.6L437.3 398.6L437.6 397.2L436.4 395.3L433.9 393.5L425.1 388.6L409.7 380.9L404.6 378.7L399.2 377.5L394.3 378.1L389.0 380.1L370.4 389.4Z" fill="#b91bea" fill-rule="evenodd"/>
<path d="M221.9 342.3L240.3 332.4L270.9 316.7L286.6 309.1L302.8 301.7L318.2 295.5L334.6 289.8L350.1 285.2L364.6 281.7L382.3 278.2L399.1 275.9L414.7 278.2L430.3 281.2L444.9 284.7L460.5 289.2L482.3 296.9L495.9 302.5L508.9 308.3L552.2 330.0L579.0 344.5L596.9 355.6L610.6 365.8L621.5 375.9L626.3 381.3L630.6 386.9L635.1 394.0L636.8 397.2L636.8 397.8L632.2 405.8L626.3 413.7L617.3 423.2L605.8 433.0L591.6 442.9L575.1 452.7L556.7 462.6L526.1 478.3L510.4 485.9L494.2 493.3L478.8 499.5L462.4 505.2L446.9 509.8L432.4 513.3L414.7 516.8L397.9 519.1L382.3 516.8L366.7 513.8L352.1 510.3L336.5 505.8L314.7 498.1L301.1 492.5L288.1 486.7L244.8 465.0L218.0 450.5L200.1 439.4L186.4 429.2L175.5 419.1L170.7 413.7L166.4 408.1L161.9 401.0L160.2 397.8L160.2 397.2L164.8 389.2L170.7 381.3L179.7 371.8L191.2 362.0L205.4 352.1ZM361.5 394.2L359.4 396.3L358.9 397.6L360.3 399.8L362.8 401.7L371.6 406.6L387.1 414.3L394.0 417.0L398.2 417.7L403.0 417.0L409.9 414.3L426.9 405.8L435.5 400.8L437.6 398.7L438.1 397.4L436.7 395.2L434.2 393.3L425.4 388.4L409.9 380.7L403.0 378.0L398.8 377.3L394.0 378.0L387.1 380.7L370.1 389.2Z" fill="#c620e6" fill-rule="evenodd"/>
<path d="M217.2 346.2L232.4 337.7L252.1 327.5L278.3 314.2L297.4 305.2L310.7 299.5L324.7 294.2L339.6 289.2L355.4 284.8L379.0 279.7L392.9 277.4L399.3 276.7L424.7 280.9L449.7 287.0L474.1 294.8L498.0 304.5L523.4 316.5L567.6 339.3L587.7 351.0L603.4 361.7L616.1 372.4L626.0 383.0L630.9 389.9L635.1 397.1L635.1 397.9L633.8 400.4L629.3 407.5L621.3 417.4L615.0 423.6L609.4 428.6L597.0 437.9L579.8 448.8L564.6 457.3L544.9 467.5L518.7 480.8L499.6 489.8L486.3 495.5L472.3 500.8L457.4 505.8L441.6 510.2L418.0 515.3L404.1 517.6L397.7 518.3L372.3 514.1L347.3 508.0L322.9 500.2L299.0 490.5L273.6 478.5L229.4 455.7L209.3 444.0L193.6 433.3L180.9 422.6L171.0 412.0L166.1 405.1L161.9 397.9L161.9 397.1L163.2 394.6L167.7 387.5L175.7 377.6L182.0 371.4L187.6 366.4L200.0 357.1ZM360.0 395.1L358.6 397.4L359.1 398.9L361.2 400.9L363.9 402.6L374.3 408.3L386.8 414.4L393.7 417.1L398.4 417.9L403.3 417.1L411.8 413.7L428.7 405.1L437.0 399.9L438.4 397.6L437.9 396.1L435.8 394.1L433.1 392.4L422.7 386.7L410.2 380.6L403.3 377.9L398.6 377.1L393.7 377.9L385.2 381.3L368.3 389.9Z" fill="#d127de" fill-rule="evenodd"/>
<path d="M213.2 349.8L226.1 342.3L242.5 333.5L274.7 317.1L293.6 308.0L308.4 301.5L322.3 296.1L335.0 291.6L348.5 287.6L373.5 281.6L397.7 277.5L405.2 278.4L419.1 280.7L442.5 285.9L454.4 289.2L467.5 293.5L491.9 302.9L516.1 314.0L556.0 334.3L578.1 346.4L595.9 357.7L603.5 363.2L610.6 369.0L621.1 379.3L628.1 388.2L633.5 397.1L633.5 397.9L631.9 400.9L628.1 406.8L623.8 412.5L613.9 423.0L601.0 433.7L583.8 445.2L570.9 452.7L554.5 461.5L522.3 477.9L503.4 487.0L488.6 493.5L474.7 498.9L462.0 503.4L448.5 507.4L423.5 513.4L399.3 517.5L391.8 516.6L377.9 514.3L354.5 509.1L342.6 505.8L329.5 501.5L305.1 492.1L280.9 481.0L241.0 460.7L218.9 448.6L201.1 437.3L193.5 431.8L186.4 426.0L175.9 415.7L168.9 406.8L163.5 397.9L163.5 397.1L165.1 394.1L168.9 388.2L173.2 382.5L183.1 372.0L196.0 361.3ZM370.9 388.1L363.7 392.2L359.8 394.9L358.2 397.3L358.8 399.0L362.3 401.9L369.4 406.1L383.3 413.1L391.6 416.7L395.5 417.8L398.1 418.1L403.5 417.3L412.1 413.8L426.1 406.9L433.3 402.8L437.2 400.1L438.8 397.7L438.2 396.0L434.7 393.1L427.6 388.9L413.7 381.9L405.4 378.3L401.5 377.2L398.9 376.9L393.5 377.7L384.9 381.2Z" fill="#d930d2" fill-rule="evenodd"/>
<path d="M231.4 340.5L280.4 315.3L296.3 307.8L311.2 301.4L327.0 295.3L341.8 290.4L357.7 286.0L374.7 282.2L390.7 279.4L399.1 278.4L415.6 280.9L433.1 284.5L449.3 288.7L466.4 294.1L489.2 302.8L511.9 313.1L554.9 334.8L579.9 348.7L596.1 359.2L609.4 369.6L615.8 375.6L620.8 380.9L628.6 391.5L631.9 397.2L631.9 397.8L628.6 403.5L625.2 408.5L620.8 414.1L615.8 419.4L606.0 428.4L594.8 436.8L581.3 445.5L565.6 454.5L516.6 479.7L500.7 487.2L485.8 493.6L470.0 499.7L455.2 504.6L439.3 509.0L422.3 512.8L406.3 515.6L397.9 516.6L381.4 514.1L363.9 510.5L347.7 506.3L330.6 500.9L307.8 492.2L285.1 481.9L242.1 460.2L217.1 446.3L200.9 435.8L187.6 425.4L181.2 419.4L176.2 414.1L168.4 403.5L165.1 397.8L165.1 397.2L168.4 391.5L171.8 386.5L176.2 380.9L181.2 375.6L191.0 366.6L202.2 358.2L215.7 349.5ZM364.8 391.2L360.7 393.8L358.4 396.1L357.9 397.9L359.5 400.2L367.6 405.5L378.2 411.0L389.6 416.1L395.3 417.9L397.7 418.2L401.2 418.0L407.4 416.1L418.8 411.0L432.2 403.8L436.3 401.2L438.6 398.9L439.1 397.1L437.5 394.8L429.4 389.5L418.8 384.0L407.4 378.9L401.7 377.1L399.3 376.8L395.8 377.0L389.6 378.9L378.2 384.0Z" fill="#e139c6" fill-rule="evenodd"/>
<path d="M223.0 346.4L240.1 337.0L269.1 322.1L287.8 312.8L302.3 306.2L316.5 300.2L329.9 295.3L344.9 290.4L358.9 286.6L380.4 282.0L396.8 279.4L399.7 279.3L412.8 281.3L427.6 284.2L452.1 290.4L476.0 298.5L499.6 308.4L527.9 322.1L568.8 343.4L587.1 354.4L601.3 364.4L612.6 374.2L618.1 379.8L622.6 385.3L626.4 390.6L630.1 396.9L630.1 398.1L628.6 400.8L622.6 409.7L614.7 418.8L603.6 428.8L589.8 438.9L574.0 448.6L556.9 458.0L527.9 472.9L509.2 482.2L494.7 488.8L480.5 494.8L467.1 499.7L452.1 504.6L438.1 508.4L416.6 513.0L400.2 515.6L397.3 515.7L384.2 513.7L369.4 510.8L344.9 504.6L321.0 496.5L297.4 486.6L269.1 472.9L228.2 451.6L209.9 440.6L195.7 430.6L184.4 420.8L178.9 415.2L174.4 409.7L170.6 404.4L166.9 398.1L166.9 396.9L168.4 394.2L174.4 385.3L182.3 376.2L193.4 366.2L207.2 356.1ZM363.1 391.9L359.3 394.7L357.9 396.4L357.6 398.1L359.3 400.3L365.8 404.8L377.8 411.2L387.6 415.6L395.0 418.1L397.4 418.4L402.0 418.1L409.4 415.6L422.3 409.6L433.9 403.1L437.7 400.3L439.1 398.6L439.4 396.9L437.7 394.7L431.2 390.2L419.2 383.8L409.4 379.4L402.0 376.9L399.6 376.6L395.0 376.9L387.6 379.4L374.7 385.4Z" fill="#e842b9" fill-rule="evenodd"/>
<path d="M218.7 350.2L232.3 342.4L248.8 333.6L279.5 318.0L298.5 308.9L311.7 303.2L325.6 297.8L340.2 292.8L352.0 289.3L375.0 283.9L398.1 280.1L420.4 283.6L442.6 288.7L466.0 295.8L491.2 305.7L515.9 317.2L555.7 337.6L577.7 349.8L592.6 359.4L600.1 364.9L607.1 370.8L617.3 381.0L623.4 388.8L628.5 397.3L626.4 401.5L622.7 407.2L618.3 412.8L608.0 423.4L595.1 433.8L578.3 444.8L564.7 452.6L548.2 461.4L517.5 477.0L498.5 486.1L485.3 491.8L471.4 497.2L456.8 502.2L445.0 505.7L422.0 511.1L398.9 514.9L376.6 511.4L354.4 506.3L331.0 499.2L305.8 489.3L281.1 477.8L241.3 457.4L219.3 445.2L204.4 435.6L196.9 430.1L189.9 424.2L179.7 414.0L173.6 406.2L168.5 397.7L170.6 393.5L174.3 387.8L178.7 382.2L189.0 371.6L201.9 361.2ZM360.2 393.6L358.0 395.6L357.3 396.8L357.3 398.2L359.0 400.5L362.7 403.3L371.3 408.2L383.8 414.4L392.7 417.7L397.1 418.5L400.2 418.5L404.3 417.7L413.2 414.4L428.7 406.6L436.8 401.4L439.0 399.4L439.7 398.2L439.7 396.8L438.0 394.5L434.3 391.7L425.7 386.8L413.2 380.6L404.3 377.3L399.9 376.5L396.8 376.5L392.7 377.3L383.8 380.6L368.3 388.4Z" fill="#f04bad" fill-rule="evenodd"/>
<path d="M216.5 352.8L229.1 345.4L243.9 337.4L291.7 313.3L318.1 301.7L342.9 293.0L356.7 289.1L368.3 286.3L383.3 283.3L397.2 281.1L399.8 281.1L413.7 283.3L434.3 287.6L455.4 293.4L478.9 301.7L502.1 311.8L530.2 325.6L560.5 341.4L582.1 353.8L591.0 359.8L598.9 365.6L607.4 372.8L613.8 379.2L622.2 389.8L626.5 396.8L626.5 398.2L622.2 405.2L618.5 410.2L613.8 415.8L608.0 421.6L596.4 431.3L580.5 442.2L567.9 449.6L553.1 457.6L505.3 481.7L478.9 493.3L454.1 502.0L440.3 505.9L428.7 508.7L413.7 511.7L399.8 513.9L397.2 513.9L383.3 511.7L362.7 507.4L341.6 501.6L318.1 493.3L294.9 483.2L266.8 469.4L236.5 453.6L214.9 441.2L206.0 435.2L198.1 429.4L189.6 422.2L183.2 415.8L174.8 405.2L170.5 398.2L170.5 396.8L174.8 389.8L178.5 384.8L183.2 379.2L189.0 373.4L200.6 363.7ZM372.5 385.8L365.1 389.8L359.9 393.4L357.7 395.4L357.0 396.6L357.0 398.4L358.7 400.6L363.7 404.3L370.9 408.4L381.8 413.8L392.4 417.8L396.8 418.7L400.2 418.7L404.6 417.8L410.1 416.0L424.5 409.2L431.9 405.2L437.1 401.6L439.3 399.6L440.0 398.4L440.0 396.6L438.3 394.4L433.3 390.7L426.1 386.6L415.2 381.2L404.6 377.2L400.2 376.3L396.8 376.3L392.4 377.2L386.9 379.0Z" fill="#f854a1" fill-rule="evenodd"/>
<path d="M241.1 340.3L288.3 316.2L304.3 308.8L319.5 302.4L336.8 296.1L352.1 291.4L369.2 287.2L384.6 284.1L398.2 282.0L412.4 284.1L427.0 287.0L442.3 290.7L457.8 295.3L469.9 299.5L491.0 308.1L513.4 318.5L556.2 340.4L580.5 354.4L596.3 365.3L606.6 374.1L612.6 380.1L617.2 385.6L620.8 390.6L624.3 396.4L624.8 397.6L621.4 403.4L617.4 409.2L609.8 417.8L602.2 424.8L591.3 433.4L582.1 439.6L569.4 447.2L555.9 454.7L508.7 478.8L492.7 486.2L477.5 492.6L460.2 498.9L444.9 503.6L427.8 507.8L412.4 510.9L398.8 513.0L384.6 510.9L370.0 508.0L354.7 504.3L339.2 499.7L327.1 495.5L306.0 486.9L283.6 476.5L240.8 454.6L216.5 440.6L200.7 429.7L190.4 420.9L184.4 414.9L179.8 409.4L176.2 404.4L172.7 398.6L172.2 397.4L175.6 391.6L179.6 385.8L187.2 377.2L194.8 370.2L205.7 361.6L214.9 355.4L227.6 347.8ZM364.7 389.6L359.5 393.2L356.7 396.5L356.7 398.5L358.4 400.8L362.0 403.6L366.1 406.2L376.6 411.8L386.5 416.1L394.2 418.5L397.6 418.9L400.5 418.9L408.7 416.8L418.8 412.6L432.3 405.4L437.5 401.8L440.3 398.5L440.3 396.5L438.6 394.2L435.0 391.4L430.9 388.8L420.4 383.2L410.5 378.9L402.8 376.5L399.4 376.1L396.5 376.1L388.3 378.2L378.2 382.4Z" fill="#ff5d95" fill-rule="evenodd"/>
<path d="M245.6 339.5L293.0 315.5L309.2 308.1L324.5 301.9L338.9 296.7L354.3 292.1L371.5 287.8L388.4 284.5L399.2 283.0L419.8 286.6L444.7 292.6L458.1 296.7L470.8 301.2L491.1 309.6L513.4 320.1L554.6 341.3L578.6 355.0L593.5 365.2L605.1 374.9L611.0 380.9L615.6 386.4L619.2 391.4L622.8 397.1L622.8 397.9L619.2 403.6L613.4 411.3L606.1 419.1L598.3 426.0L588.7 433.3L578.6 440.0L566.4 447.3L551.4 455.5L504.0 479.5L487.8 486.9L472.5 493.1L458.1 498.3L442.7 502.9L425.5 507.2L408.6 510.5L397.8 512.0L377.2 508.4L352.3 502.4L338.9 498.3L326.2 493.8L305.9 485.4L283.6 474.9L242.4 453.7L218.4 440.0L203.5 429.8L191.9 420.1L186.0 414.1L181.4 408.6L177.8 403.6L174.2 397.9L174.2 397.1L177.8 391.4L183.6 383.7L190.9 375.9L198.7 369.0L208.3 361.7L218.4 355.0L230.6 347.7ZM361.6 391.2L358.1 394.1L356.3 396.3L356.1 397.3L356.3 398.7L357.1 399.9L360.4 402.9L367.1 407.3L379.3 413.5L387.9 417.0L396.2 419.0L399.0 419.1L403.1 418.6L412.6 415.7L425.5 409.7L435.4 403.8L438.9 400.9L440.7 398.7L440.9 397.7L440.7 396.3L439.9 395.1L436.6 392.1L429.9 387.7L417.7 381.5L409.1 378.0L400.8 376.0L398.0 375.9L393.9 376.4L384.4 379.3L371.5 385.3Z" fill="#ff668d" fill-rule="evenodd"/>
<path d="M221.9 354.8L233.8 347.8L248.6 339.8L298.0 314.9L322.7 304.1L347.3 295.5L359.9 291.8L372.4 288.8L397.0 284.2L400.0 284.2L409.2 285.7L429.9 290.0L449.7 295.5L470.8 302.8L492.6 311.9L517.8 324.1L554.4 342.9L575.1 354.8L585.4 361.5L593.1 367.1L601.2 373.8L607.5 379.9L612.4 385.3L616.7 390.9L620.5 396.7L620.5 398.3L616.7 404.1L612.4 409.7L602.6 419.9L590.5 429.9L575.1 440.2L563.2 447.2L548.4 455.2L499.0 480.1L474.3 490.9L449.7 499.5L437.1 503.2L424.6 506.2L400.0 510.8L397.0 510.8L387.8 509.3L367.1 505.0L347.3 499.5L326.2 492.2L304.4 483.1L279.2 470.9L242.6 452.1L221.9 440.2L211.6 433.5L203.9 427.9L195.8 421.2L189.5 415.1L184.6 409.7L180.3 404.1L176.5 398.3L176.5 396.7L180.3 390.9L184.6 385.3L194.4 375.1L206.5 365.1ZM360.0 391.9L356.8 395.0L355.7 397.5L356.8 400.0L361.2 404.0L368.1 408.3L380.5 414.5L389.5 417.7L395.9 419.2L398.6 419.3L403.4 418.8L414.8 415.2L428.9 408.3L437.0 403.1L440.2 400.0L441.3 397.5L440.2 395.0L435.8 391.0L428.9 386.7L416.5 380.5L407.5 377.3L401.1 375.8L398.4 375.7L393.6 376.2L382.2 379.8L368.1 386.7Z" fill="#ff6e84" fill-rule="evenodd"/>
<path d="M227.5 353.5L253.6 339.2L285.8 322.8L303.0 314.4L328.1 303.7L340.6 299.2L353.8 295.0L374.1 289.7L398.2 285.1L414.2 287.8L433.3 292.2L445.1 295.5L458.1 299.7L482.6 309.3L506.6 320.4L544.9 339.9L565.7 351.2L582.3 361.6L596.0 371.7L602.7 377.7L607.8 382.9L613.9 390.2L618.7 397.3L617.2 400.0L609.5 410.2L603.8 416.2L598.2 421.3L584.9 431.7L569.5 441.5L543.4 455.8L511.2 472.2L494.0 480.6L468.9 491.3L456.4 495.8L443.2 500.0L422.9 505.3L398.8 509.9L382.8 507.2L363.7 502.8L351.9 499.5L338.9 495.3L314.4 485.7L290.4 474.6L252.1 455.1L231.3 443.8L214.7 433.4L201.0 423.3L194.3 417.3L189.2 412.1L183.1 404.8L178.3 397.7L179.8 395.0L187.5 384.8L193.2 378.8L198.8 373.7L212.1 363.3ZM364.8 388.1L359.6 391.7L356.5 394.8L355.3 397.3L356.5 400.2L360.8 404.2L367.7 408.6L380.1 414.7L389.1 417.9L393.2 419.0L398.2 419.5L405.9 418.5L416.9 414.7L432.2 406.9L437.4 403.3L440.5 400.2L441.7 397.7L440.5 394.8L436.2 390.8L429.3 386.4L416.9 380.3L407.9 377.1L403.8 376.0L398.8 375.5L391.1 376.5L380.1 380.3Z" fill="#ff777c" fill-rule="evenodd"/>
<path d="M236.1 350.6L252.6 341.8L283.1 326.1L311.5 312.4L324.8 306.7L337.1 302.0L350.0 297.7L363.6 293.7L382.4 289.2L398.9 286.3L418.9 290.1L439.4 295.3L461.7 302.7L485.5 312.4L509.2 323.8L554.9 347.3L573.6 358.2L588.0 368.0L599.7 377.6L609.7 388.2L614.0 393.8L616.4 397.7L612.4 403.5L607.9 409.0L598.6 418.4L588.0 427.0L576.3 435.1L560.9 444.4L544.4 453.2L513.9 468.9L485.5 482.6L472.2 488.3L459.9 493.0L447.0 497.3L433.4 501.3L414.6 505.8L398.1 508.7L378.1 504.9L357.6 499.7L335.3 492.3L311.5 482.6L287.8 471.2L242.1 447.7L223.4 436.8L209.0 427.0L197.3 417.4L187.3 406.8L183.0 401.2L180.6 397.3L184.6 391.5L189.1 386.0L198.4 376.6L209.0 368.0L220.7 359.9ZM361.7 389.6L356.1 394.6L354.9 397.1L355.4 399.2L358.1 402.5L364.4 407.1L376.4 413.4L384.9 416.9L392.9 419.1L397.8 419.7L401.8 419.5L412.1 416.9L423.7 411.9L435.3 405.4L440.9 400.4L442.1 397.9L441.6 395.8L438.9 392.5L432.6 387.9L420.6 381.6L412.1 378.1L404.1 375.9L399.2 375.3L395.2 375.5L384.9 378.1L373.3 383.1Z" fill="#ff8073" fill-rule="evenodd"/>
<path d="M255.6 342.3L302.2 318.7L316.7 312.0L332.0 305.7L348.1 299.9L363.5 295.2L379.9 291.1L395.8 287.9L399.4 287.6L401.7 288.0L427.5 293.6L447.0 299.3L465.0 305.7L483.5 313.4L505.7 324.0L548.5 346.0L570.2 358.3L584.8 368.1L596.7 377.6L606.0 386.9L613.8 397.0L613.8 398.0L611.4 401.4L604.1 410.2L596.7 417.4L588.5 424.2L579.7 430.6L568.8 437.5L555.9 445.0L541.4 452.7L494.8 476.3L480.3 483.0L465.0 489.3L448.9 495.1L433.5 499.8L417.1 503.9L401.2 507.1L397.6 507.4L395.3 507.0L369.5 501.4L350.0 495.7L332.0 489.3L313.5 481.6L291.3 471.0L248.5 449.0L226.8 436.7L212.2 426.9L200.3 417.4L191.0 408.1L183.2 398.0L183.2 397.0L185.6 393.6L192.9 384.8L200.3 377.6L208.5 370.8L217.3 364.4L228.2 357.5L241.1 350.0ZM360.0 390.4L356.7 393.4L355.0 395.6L354.5 396.9L355.0 399.4L358.8 403.7L365.4 408.1L377.6 414.4L384.5 417.1L392.6 419.3L397.4 419.9L402.2 419.7L412.5 417.1L417.7 415.1L425.6 411.3L433.0 407.3L437.0 404.6L440.3 401.6L442.0 399.4L442.5 398.1L442.0 395.6L438.2 391.3L431.6 386.9L419.4 380.6L412.5 377.9L404.4 375.7L399.6 375.1L394.8 375.3L384.5 377.9L379.3 379.9L371.4 383.7L364.0 387.7Z" fill="#ff896b" fill-rule="evenodd"/>
<path d="M230.5 358.2L253.5 345.4L301.0 321.2L323.6 310.8L344.5 302.7L357.6 298.5L369.4 295.1L381.8 292.1L397.2 289.0L399.8 289.0L417.3 292.5L437.5 297.9L457.9 304.7L478.3 313.0L499.1 322.7L543.5 345.4L564.1 356.7L573.8 362.7L582.9 369.0L591.2 375.5L598.1 381.6L607.8 392.3L611.1 396.8L611.1 398.2L603.1 408.2L593.7 417.4L581.6 426.9L566.5 436.8L543.5 449.6L496.0 473.8L473.4 484.2L452.5 492.3L439.4 496.5L427.6 499.9L415.2 502.9L399.8 506.0L397.2 506.0L379.7 502.5L359.5 497.1L339.1 490.3L318.7 482.0L297.9 472.3L253.5 449.6L232.9 438.3L223.2 432.3L214.1 426.0L205.8 419.5L198.9 413.4L189.2 402.7L185.9 398.2L185.9 396.8L193.9 386.8L203.3 377.6L215.4 368.1ZM358.4 391.1L354.6 395.4L354.2 396.8L354.2 398.2L354.6 399.6L356.3 401.8L359.6 404.8L366.5 409.2L378.9 415.3L386.0 418.0L394.5 419.9L402.5 419.9L409.0 418.5L414.7 416.7L429.1 410.0L434.8 406.7L438.6 403.9L442.4 399.6L442.8 398.2L442.8 396.8L442.4 395.4L440.7 393.2L437.4 390.2L430.5 385.8L418.1 379.7L411.0 377.0L402.5 375.1L394.5 375.1L388.0 376.5L382.3 378.3L367.9 385.0L362.2 388.3Z" fill="#ff9163" fill-rule="evenodd"/>
<path d="M236.6 356.7L259.9 344.0L307.6 319.9L330.6 309.7L351.9 301.8L375.4 295.0L397.1 290.4L402.3 290.8L421.6 295.0L441.7 300.7L463.0 308.3L484.6 317.6L509.5 329.9L546.1 348.7L567.8 361.1L577.2 367.3L585.9 373.7L592.9 379.6L599.2 385.7L604.0 391.1L608.4 396.8L608.4 398.2L606.7 400.6L598.2 410.3L588.1 419.5L575.9 428.6L560.4 438.3L537.1 451.0L489.4 475.1L466.4 485.3L445.1 493.2L421.6 500.0L399.9 504.6L394.7 504.2L375.4 500.0L355.3 494.3L334.0 486.7L312.4 477.4L287.5 465.1L250.9 446.3L229.2 433.9L219.8 427.7L211.1 421.3L204.1 415.4L197.8 409.3L193.0 403.9L188.6 398.2L188.6 396.8L190.3 394.4L198.8 384.7L208.9 375.5L221.1 366.4ZM363.2 387.3L358.0 390.9L354.3 395.2L353.7 396.5L353.6 398.0L355.0 400.9L359.2 405.1L364.6 408.6L376.8 414.8L385.6 418.2L391.8 419.7L396.6 420.4L400.4 420.4L405.2 419.7L411.4 418.2L418.5 415.5L426.5 411.8L433.8 407.7L439.0 404.1L442.7 399.8L443.3 398.5L443.4 397.0L442.0 394.1L437.8 389.9L432.4 386.4L420.2 380.2L411.4 376.8L405.2 375.3L400.4 374.6L396.6 374.6L391.8 375.3L385.6 376.8L378.5 379.5L370.5 383.2Z" fill="#ff9a5b" fill-rule="evenodd"/>
<path d="M244.5 354.2L292.4 329.3L315.9 317.8L339.4 307.9L361.4 300.4L379.5 295.5L397.5 291.7L399.5 291.7L409.6 293.7L429.7 298.7L452.3 306.0L476.2 315.6L498.4 326.2L544.3 349.7L563.1 360.4L577.8 370.0L589.8 379.6L600.1 389.9L605.7 397.0L605.7 398.0L597.2 408.3L588.7 416.4L578.7 424.3L567.3 432.1L552.5 440.8L504.6 465.7L481.1 477.2L457.6 487.1L435.6 494.6L417.5 499.5L399.5 503.3L397.5 503.3L387.4 501.3L367.3 496.3L344.7 489.0L320.8 479.4L298.6 468.8L252.7 445.3L233.9 434.6L219.2 425.0L207.2 415.4L196.9 405.1L191.3 398.0L191.3 397.0L199.8 386.7L208.3 378.6L218.3 370.7L229.7 362.9ZM360.0 388.8L356.5 391.7L354.6 393.8L353.2 396.3L353.2 398.7L354.6 401.2L356.5 403.3L362.7 407.9L373.2 413.5L381.5 417.1L389.2 419.4L393.6 420.3L399.0 420.7L403.4 420.3L409.9 419.0L415.5 417.1L422.2 414.3L431.4 409.6L437.0 406.2L440.5 403.3L442.4 401.2L443.8 398.7L443.8 396.3L442.4 393.8L440.5 391.7L434.3 387.1L423.8 381.5L415.5 377.9L407.8 375.6L403.4 374.7L398.0 374.3L393.6 374.7L387.1 376.0L381.5 377.9L374.8 380.7L365.6 385.4Z" fill="#ffa254" fill-rule="evenodd"/>
<path d="M260.0 347.8L306.7 324.1L332.7 312.3L346.7 306.9L359.6 302.6L373.3 298.7L387.9 295.2L397.7 293.2L399.3 293.2L413.4 296.1L425.7 299.2L437.4 302.6L450.3 306.9L469.4 314.4L490.3 324.1L537.8 348.3L558.4 359.6L573.3 369.2L585.6 378.6L595.2 387.8L602.9 397.1L602.9 397.9L601.0 400.4L594.2 408.3L586.7 415.4L579.6 421.2L570.7 427.6L561.2 433.7L537.0 447.2L490.3 470.9L464.3 482.7L450.3 488.1L437.4 492.4L423.7 496.3L409.1 499.8L399.3 501.8L397.7 501.8L383.6 498.9L371.3 495.8L359.6 492.4L346.7 488.1L327.6 480.6L306.7 470.9L259.2 446.7L238.6 435.4L223.7 425.8L211.4 416.4L201.8 407.2L194.1 397.9L194.1 397.1L196.0 394.6L202.8 386.7L210.3 379.6L217.4 373.8L226.3 367.4L235.8 361.3ZM358.3 389.5L354.2 393.6L352.8 396.0L352.5 397.5L353.3 400.2L356.0 403.6L362.3 408.2L374.4 414.5L382.8 418.0L390.9 420.1L395.6 420.8L401.4 420.8L408.3 419.7L412.3 418.6L417.7 416.7L425.8 413.0L433.3 409.0L438.7 405.5L442.8 401.4L444.2 399.0L444.5 397.5L443.7 394.8L441.0 391.4L434.7 386.8L422.6 380.5L414.2 377.0L406.1 374.9L401.4 374.2L395.6 374.2L388.7 375.3L384.7 376.4L379.3 378.3L371.2 382.0L363.7 386.0Z" fill="#ffaa4d" fill-rule="evenodd"/>
<path d="M237.3 362.5L258.1 350.8L303.9 327.3L323.0 318.3L341.5 310.6L354.1 306.0L365.5 302.5L379.5 298.7L392.3 295.8L397.6 294.8L399.4 294.8L409.1 296.7L427.6 301.3L446.6 307.3L465.8 314.7L485.2 323.5L532.9 347.7L553.7 358.9L571.4 370.2L578.9 375.8L585.8 381.6L595.7 391.8L599.7 397.0L599.7 398.0L593.1 406.1L583.5 415.4L572.7 423.9L559.7 432.5L538.9 444.2L493.1 467.7L474.0 476.7L455.5 484.4L442.9 489.0L431.5 492.5L417.5 496.3L404.7 499.2L399.4 500.2L397.6 500.2L387.9 498.3L369.4 493.7L350.4 487.7L331.2 480.3L311.8 471.5L264.1 447.3L243.3 436.1L225.6 424.8L218.1 419.2L211.2 413.4L201.3 403.2L197.3 398.0L197.3 397.0L203.9 388.9L213.5 379.6L224.3 371.1ZM363.3 385.8L357.9 389.3L353.6 393.4L352.3 395.8L351.9 397.2L352.9 400.5L354.5 402.7L356.7 404.8L361.8 408.4L373.9 414.7L382.4 418.3L388.2 419.9L395.1 421.1L399.1 421.3L404.3 420.8L410.8 419.4L418.2 416.9L433.7 409.2L439.1 405.7L443.4 401.6L444.7 399.2L445.1 397.8L444.1 394.5L442.5 392.3L440.3 390.2L435.2 386.6L423.1 380.3L414.6 376.7L408.8 375.1L401.9 373.9L397.9 373.7L392.7 374.2L386.2 375.6L378.8 378.1Z" fill="#ffb247" fill-rule="evenodd"/>
<path d="M243.5 360.9L263.0 350.2L312.1 325.2L331.5 316.4L348.8 309.6L371.5 302.4L383.8 299.3L397.3 296.5L399.7 296.5L415.3 299.8L433.3 304.7L451.8 310.9L470.5 318.5L489.6 327.5L535.5 351.0L554.6 361.6L564.2 367.6L572.0 373.0L579.2 378.7L585.8 384.7L594.5 394.4L596.4 396.9L596.4 398.1L588.9 407.1L579.2 416.3L568.2 424.7L553.5 434.1L534.0 444.8L484.9 469.8L465.5 478.6L448.2 485.4L425.5 492.6L413.2 495.7L399.7 498.5L397.3 498.5L381.7 495.2L363.7 490.3L345.2 484.1L326.5 476.5L307.4 467.5L261.5 444.0L242.4 433.4L232.8 427.4L225.0 422.0L217.8 416.3L211.2 410.3L202.5 400.6L200.6 398.1L200.6 396.9L208.1 387.9L217.8 378.7L228.8 370.3ZM358.6 388.1L354.0 392.0L351.7 395.5L351.4 396.9L351.7 399.5L354.0 403.0L360.0 407.8L368.8 412.7L378.4 417.2L387.7 420.2L394.6 421.4L399.7 421.6L404.8 421.1L411.3 419.7L416.9 417.8L423.6 415.0L432.7 410.3L438.4 406.9L443.0 403.0L445.3 399.5L445.6 398.1L445.3 395.5L443.0 392.0L437.0 387.2L428.2 382.3L418.6 377.8L409.3 374.8L402.4 373.6L397.3 373.4L392.2 373.9L385.7 375.3L380.1 377.2L373.4 380.0L364.3 384.7Z" fill="#ffba40" fill-rule="evenodd"/>
<path d="M250.9 358.7L269.4 348.8L318.7 323.9L338.5 315.3L358.1 308.1L377.6 302.4L397.1 298.1L402.3 298.6L421.4 303.0L444.4 310.0L467.0 318.8L487.7 328.5L530.6 350.4L549.9 360.9L563.6 369.5L576.0 378.8L585.7 387.9L593.1 396.8L593.1 398.2L590.5 401.7L582.7 410.2L572.5 419.1L561.0 427.3L546.1 436.3L527.6 446.2L478.3 471.1L458.5 479.7L438.9 486.9L419.4 492.6L399.9 496.9L394.7 496.4L375.6 492.0L352.6 485.0L330.0 476.2L309.3 466.5L266.4 444.6L247.1 434.1L233.4 425.5L221.0 416.2L211.3 407.1L203.9 398.2L203.9 396.8L206.5 393.3L214.3 384.8L224.5 375.9L236.0 367.7ZM356.9 388.8L352.6 392.8L350.8 396.6L351.2 399.8L352.6 402.2L354.6 404.3L360.9 408.9L373.0 415.2L381.4 418.7L389.4 420.9L394.1 421.7L400.3 421.9L405.4 421.3L411.8 419.9L417.4 418.1L425.6 414.5L434.7 409.7L440.1 406.2L444.4 402.2L446.2 398.4L445.8 395.2L444.4 392.8L442.4 390.7L436.1 386.1L424.0 379.8L415.6 376.3L407.6 374.1L402.9 373.3L396.7 373.1L391.6 373.7L385.2 375.1L379.6 376.9L371.4 380.5L362.3 385.3Z" fill="#ffc239" fill-rule="evenodd"/>
<path d="M261.0 355.1L309.6 330.2L328.6 321.2L350.9 312.2L371.6 305.6L390.3 301.1L397.1 299.7L399.9 299.7L417.3 303.5L433.2 307.9L453.2 314.9L473.2 323.4L492.0 332.6L542.2 358.5L556.4 366.9L569.3 376.0L579.5 384.8L588.2 394.4L590.0 396.8L590.0 398.2L583.6 406.0L575.2 414.2L568.1 420.0L559.1 426.3L548.0 433.2L536.0 439.9L487.4 464.8L468.4 473.8L446.1 482.8L425.4 489.4L406.7 493.9L399.9 495.3L397.1 495.3L379.7 491.5L363.8 487.1L343.8 480.1L323.8 471.6L305.0 462.4L254.8 436.5L240.6 428.1L227.7 419.0L217.5 410.2L208.8 400.6L207.0 398.2L207.0 396.8L213.4 389.0L221.8 380.8L228.9 375.0L237.9 368.7L249.0 361.8ZM364.8 383.4L356.4 388.5L352.1 392.6L350.2 396.3L350.0 397.8L350.6 400.1L353.0 403.5L357.7 407.4L367.8 413.2L377.4 417.7L384.7 420.2L391.1 421.6L398.0 422.2L403.5 422.0L410.3 420.7L416.1 419.0L422.9 416.2L432.2 411.6L440.6 406.5L444.9 402.4L446.8 398.7L447.0 397.2L446.4 394.9L444.0 391.5L439.3 387.6L429.2 381.8L419.6 377.3L412.3 374.8L405.9 373.4L399.0 372.8L393.5 373.0L386.7 374.3L380.9 376.0L374.1 378.8Z" fill="#ffcb32" fill-rule="evenodd"/>
<path d="M243.8 367.1L256.6 359.5L273.1 350.7L316.1 328.9L338.8 318.5L356.4 311.9L375.7 306.1L397.0 301.3L402.3 301.8L419.3 305.6L436.9 310.7L454.8 317.2L471.4 324.3L488.6 332.7L540.4 359.5L557.2 369.6L570.9 379.8L577.2 385.5L582.5 391.1L586.9 396.8L586.9 398.2L580.5 406.0L573.2 413.2L563.7 420.8L553.2 427.9L540.4 435.5L523.9 444.3L480.9 466.1L458.2 476.5L440.6 483.1L421.3 488.9L400.0 493.7L394.7 493.2L377.7 489.4L360.1 484.3L342.2 477.8L325.6 470.7L308.4 462.3L256.6 435.5L239.8 425.4L226.1 415.2L219.8 409.5L214.5 403.9L210.1 398.2L210.1 396.8L216.5 389.0L223.8 381.8L233.3 374.2ZM358.5 386.5L353.5 390.2L351.5 392.3L350.0 394.6L349.3 397.4L349.5 399.0L351.5 402.7L355.9 406.8L362.8 411.1L375.2 417.2L384.1 420.5L390.5 421.9L395.5 422.5L401.5 422.5L408.8 421.5L414.8 419.9L421.8 417.2L429.8 413.5L438.5 408.5L443.5 404.8L445.5 402.7L447.0 400.4L447.7 397.6L447.5 396.0L445.5 392.3L441.1 388.2L434.2 383.9L421.8 377.8L412.9 374.5L406.5 373.1L401.5 372.5L395.5 372.5L388.2 373.5L382.2 375.1L375.2 377.8L367.2 381.5Z" fill="#ffd329" fill-rule="evenodd"/>
<path d="M248.5 366.2L267.4 355.6L314.8 331.3L330.7 323.8L345.8 317.4L367.8 309.9L388.2 304.7L397.0 302.9L400.0 302.9L406.6 304.2L423.3 308.2L440.5 313.5L456.4 319.5L472.8 326.8L525.1 353.2L540.0 361.2L556.7 371.5L564.2 377.0L570.1 381.8L575.4 386.9L580.3 392.2L583.8 396.7L583.8 398.3L577.1 406.4L568.9 414.2L559.2 421.7L548.5 428.8L529.6 439.4L482.2 463.7L466.3 471.2L451.2 477.6L429.2 485.1L408.8 490.3L400.0 492.1L397.0 492.1L390.4 490.8L373.7 486.8L356.5 481.5L340.6 475.5L324.2 468.2L271.9 441.8L257.0 433.8L240.3 423.5L232.8 418.0L226.9 413.2L221.6 408.1L216.7 402.8L213.2 398.3L213.2 396.7L219.9 388.6L228.1 380.8L237.8 373.3ZM355.3 387.9L351.8 390.9L350.0 393.1L348.8 395.6L348.5 397.0L348.8 399.4L350.0 401.9L351.8 404.1L357.9 408.8L366.7 413.7L376.3 418.2L385.5 421.3L392.2 422.6L397.5 423.0L404.8 422.6L411.5 421.3L419.0 418.9L425.6 416.0L436.3 410.5L441.7 407.1L445.2 404.1L447.0 401.9L448.2 399.4L448.5 398.0L448.2 395.6L447.0 393.1L445.2 390.9L439.1 386.2L430.3 381.3L420.7 376.8L411.5 373.7L404.8 372.4L397.5 372.0L392.2 372.4L385.5 373.7L378.0 376.1L371.4 379.0L360.7 384.5Z" fill="#ffdc21" fill-rule="evenodd"/>
<path d="M254.3 364.8L270.8 355.8L319.8 330.8L335.8 323.3L351.2 317.1L362.2 313.3L373.8 309.8L397.0 304.5L400.0 304.5L410.9 306.8L427.2 311.0L444.0 316.4L459.5 322.6L475.6 330.0L526.2 355.8L541.0 363.8L556.0 373.4L563.5 379.0L569.1 383.9L578.1 393.4L580.6 396.8L580.6 398.2L573.8 406.5L565.8 414.1L555.1 422.3L542.7 430.2L526.2 439.2L477.2 464.2L461.2 471.7L445.8 477.9L434.8 481.7L423.2 485.2L400.0 490.5L397.0 490.5L386.1 488.2L369.8 484.0L353.0 478.6L337.5 472.4L321.4 465.0L270.8 439.2L256.0 431.2L241.0 421.6L233.5 416.0L227.9 411.1L218.9 401.6L216.4 398.2L216.4 396.8L223.2 388.5L231.2 380.9L241.9 372.7ZM360.1 384.2L353.4 388.5L349.3 392.7L348.6 393.9L347.7 396.9L347.7 398.4L348.6 401.1L350.1 403.4L352.2 405.5L357.3 409.2L366.0 414.1L379.1 419.9L386.9 422.2L391.4 423.0L397.3 423.5L405.6 423.0L412.1 421.7L419.7 419.2L431.0 414.1L436.9 410.8L443.6 406.5L447.7 402.3L448.4 401.1L449.3 398.1L449.3 396.6L448.4 393.9L446.9 391.6L444.8 389.5L439.7 385.8L431.0 380.9L417.9 375.1L410.1 372.8L405.6 372.0L399.7 371.5L391.4 372.0L384.9 373.3L377.3 375.8L366.0 380.9Z" fill="#ffe419" fill-rule="evenodd"/>
<path d="M263.4 361.7L328.0 328.7L346.2 320.8L362.3 314.9L380.0 309.9L397.1 306.1L399.9 306.1L404.3 307.0L421.1 310.9L440.2 316.8L460.9 325.0L476.8 332.5L525.8 357.5L540.5 365.7L552.8 373.5L562.6 381.0L571.2 389.1L577.5 396.8L577.5 398.2L573.1 403.7L566.0 411.1L556.6 418.8L546.1 425.9L533.6 433.3L469.0 466.3L450.8 474.2L434.7 480.1L417.0 485.1L399.9 488.9L397.1 488.9L392.7 488.0L375.9 484.1L356.8 478.2L336.1 470.0L320.2 462.5L271.2 437.5L256.5 429.3L244.2 421.5L234.4 414.0L225.8 405.9L219.5 398.2L219.5 396.8L223.9 391.3L231.0 383.9L240.4 376.2L250.9 369.1ZM353.8 387.2L350.3 390.1L348.4 392.3L346.6 396.0L346.5 397.5L347.0 400.3L348.4 402.7L350.3 404.9L356.4 409.6L365.1 414.6L376.5 419.7L386.1 422.6L393.0 423.8L398.6 424.0L404.0 423.8L413.0 422.1L420.5 419.7L428.8 416.1L437.8 411.3L443.2 407.8L446.7 404.9L448.6 402.7L450.4 399.0L450.5 397.5L450.0 394.7L448.6 392.3L446.7 390.1L440.6 385.4L431.9 380.4L420.5 375.3L410.9 372.4L404.0 371.2L398.4 371.0L393.0 371.2L384.0 372.9L376.5 375.3L368.2 378.9L359.2 383.7Z" fill="#ffed11" fill-rule="evenodd"/>
<path d="M252.2 370.6L262.9 364.2L274.8 357.8L298.2 346.3L325.4 332.0L343.1 323.9L357.7 318.3L372.1 313.7L390.7 309.1L397.3 307.8L399.7 307.8L416.9 311.5L430.7 315.4L447.0 321.1L462.1 327.5L476.2 334.4L498.8 346.3L531.2 362.6L545.4 371.0L558.1 380.1L563.8 385.0L569.7 391.1L574.3 396.9L574.3 398.1L568.9 404.8L561.6 412.0L553.7 418.3L544.8 424.4L534.1 430.8L522.2 437.2L498.8 448.7L471.6 463.0L453.9 471.1L439.3 476.7L424.9 481.3L406.3 485.9L399.7 487.2L397.3 487.2L380.1 483.5L366.3 479.6L350.0 473.9L334.9 467.5L320.8 460.6L298.2 448.7L265.8 432.4L251.6 424.0L238.9 414.9L233.2 410.0L227.3 403.9L222.7 398.1L222.7 396.9L228.1 390.2L235.4 383.0L243.3 376.7ZM355.4 384.9L349.3 389.6L347.3 391.7L345.9 394.1L345.2 396.6L345.2 398.4L345.9 400.9L347.3 403.3L351.5 407.4L361.1 413.5L370.4 418.1L381.0 422.1L387.1 423.6L394.4 424.6L402.6 424.6L409.9 423.6L417.9 421.5L424.9 418.8L433.0 415.1L441.6 410.1L447.7 405.4L449.7 403.3L451.1 400.9L451.8 398.4L451.8 396.6L451.1 394.1L449.7 391.7L445.5 387.6L435.9 381.5L426.6 376.9L416.0 372.9L409.9 371.4L402.6 370.4L394.4 370.4L387.1 371.4L379.1 373.5L372.1 376.2L364.0 379.9Z" fill="#fff609" fill-rule="evenodd"/>
<path d="M260.2 368.0L273.9 360.5L300.4 347.4L326.0 333.9L338.6 327.9L350.4 322.9L368.5 316.5L388.8 311.2L397.5 309.5L399.5 309.5L406.1 310.8L420.7 314.3L436.0 319.0L450.1 324.3L464.8 330.8L532.0 365.3L547.3 374.7L559.4 384.2L567.5 392.5L571.0 397.0L571.0 398.0L564.6 405.7L557.1 412.8L547.3 420.3L536.8 427.0L523.1 434.5L496.6 447.6L471.0 461.1L458.4 467.1L446.6 472.1L428.5 478.5L408.2 483.8L399.5 485.5L397.5 485.5L390.9 484.2L376.3 480.7L361.0 476.0L346.9 470.7L332.2 464.2L265.0 429.7L249.7 420.3L237.6 410.8L229.5 402.5L226.0 398.0L226.0 397.0L232.4 389.3L239.9 382.2L249.7 374.7ZM355.6 383.4L349.2 388.0L345.3 392.2L344.0 394.7L343.5 397.4L343.7 399.2L344.5 401.6L346.1 403.9L349.2 407.0L357.0 412.4L366.0 417.2L377.9 422.1L385.9 424.3L393.0 425.3L401.3 425.5L408.9 424.7L417.2 422.7L424.4 420.1L434.2 415.7L441.4 411.6L447.8 407.0L451.7 402.8L453.0 400.3L453.5 397.6L453.3 395.8L452.5 393.4L450.9 391.1L447.8 388.0L440.0 382.6L431.0 377.8L419.1 372.9L411.1 370.7L404.0 369.7L395.7 369.5L388.1 370.3L379.8 372.3L372.6 374.9L362.8 379.3Z" fill="#fffe01" fill-rule="evenodd"/>
<path d="M254.1 374.3L264.2 368.0L274.6 362.4L302.6 348.6L329.7 334.2L344.1 327.5L357.8 322.0L371.6 317.4L386.9 313.4L399.2 311.2L414.3 314.4L428.2 318.3L442.8 323.3L456.2 329.0L471.9 336.6L494.4 348.6L525.5 364.0L539.8 372.3L550.2 379.5L556.0 384.3L561.3 389.5L566.6 395.7L567.6 397.2L567.6 397.8L562.2 404.5L557.1 409.7L550.2 415.5L542.9 420.7L532.8 427.0L522.4 432.6L494.4 446.4L467.3 460.8L452.9 467.5L439.2 473.0L425.4 477.6L410.1 481.6L397.8 483.8L382.7 480.6L368.8 476.7L354.2 471.7L340.8 466.0L325.1 458.4L302.6 446.4L271.5 431.0L257.2 422.7L246.8 415.5L241.0 410.7L235.7 405.5L230.4 399.3L229.4 397.8L229.4 397.2L234.8 390.5L239.9 385.3L246.8 379.5ZM355.6 381.8L349.0 386.3L345.6 389.3L343.8 391.4L342.4 393.9L341.6 396.6L341.6 398.4L342.4 401.1L345.6 405.7L349.0 408.7L352.8 411.4L361.3 416.5L374.7 422.2L382.3 424.5L391.4 426.2L399.8 426.5L408.1 425.8L414.7 424.5L424.1 421.5L435.7 416.5L441.4 413.2L448.0 408.7L451.4 405.7L453.2 403.6L454.6 401.1L455.4 398.4L455.4 396.6L454.6 393.9L451.4 389.3L448.0 386.3L444.2 383.6L435.7 378.5L422.3 372.8L414.7 370.5L405.6 368.8L397.2 368.5L388.9 369.2L382.3 370.5L372.9 373.5L361.3 378.5Z" fill="#ffff24" fill-rule="evenodd"/>
<path d="M261.9 371.8L278.4 362.8L305.2 349.9L330.5 336.2L347.9 327.9L361.3 322.7L373.1 318.9L387.3 315.2L398.8 312.9L413.6 316.1L427.0 319.8L440.5 324.5L454.0 330.1L469.6 337.8L491.8 349.9L512.4 359.7L526.1 366.7L538.9 374.3L549.1 381.6L558.0 389.8L562.5 395.1L564.1 397.6L558.0 405.2L551.4 411.5L544.2 417.1L535.1 423.2L518.6 432.2L491.8 445.1L466.5 458.8L449.1 467.1L435.7 472.3L423.9 476.1L409.7 479.8L398.2 482.1L383.4 478.9L370.0 475.2L356.5 470.5L343.0 464.9L327.4 457.2L305.2 445.1L284.6 435.3L270.9 428.3L258.1 420.7L247.9 413.4L239.0 405.2L234.5 399.9L232.9 397.4L239.0 389.8L245.6 383.5L252.8 377.9ZM354.0 381.0L347.4 385.5L342.1 390.6L340.6 392.9L339.6 395.6L339.4 398.0L340.0 400.8L341.3 403.3L344.0 406.6L349.9 411.4L359.7 417.3L371.3 422.3L380.7 425.3L389.6 427.1L397.6 427.7L407.4 427.1L416.3 425.3L423.9 423.0L437.3 417.3L443.0 414.0L449.6 409.5L454.9 404.4L456.4 402.1L457.4 399.4L457.6 397.0L457.0 394.2L455.7 391.7L453.0 388.4L447.1 383.6L437.3 377.7L425.7 372.7L416.3 369.7L407.4 367.9L399.4 367.3L389.6 367.9L380.7 369.7L373.1 372.0L359.7 377.7Z" fill="#ffff4c" fill-rule="evenodd"/>
<path d="M260.3 375.8L269.1 370.5L279.7 365.0L308.8 351.7L333.3 337.6L350.6 329.3L362.6 324.5L374.6 320.6L392.2 316.3L397.1 315.4L399.9 315.4L415.2 318.6L425.1 321.4L437.9 325.8L449.7 330.7L465.2 338.4L488.2 351.7L509.4 361.2L523.5 368.1L535.0 374.7L544.1 381.0L549.2 385.3L555.4 391.6L559.4 396.8L559.4 398.2L555.4 403.4L549.2 409.7L544.1 414.0L536.7 419.2L527.9 424.5L517.3 430.0L488.2 443.3L463.7 457.4L446.4 465.7L434.4 470.5L422.4 474.4L404.8 478.7L399.9 479.6L397.1 479.6L381.8 476.4L371.9 473.6L359.1 469.2L347.3 464.3L331.8 456.6L308.8 443.3L287.6 433.8L273.5 426.9L262.0 420.3L252.9 414.0L247.8 409.7L241.6 403.4L237.6 398.2L237.6 396.8L241.6 391.6L247.8 385.3L252.9 381.0ZM350.9 381.0L343.4 386.5L340.3 389.7L338.7 392.0L337.5 394.5L337.1 397.4L338.0 401.8L339.4 404.2L342.3 407.4L345.7 410.4L350.9 414.0L358.0 418.2L373.3 424.5L383.2 427.2L392.0 428.6L401.5 428.8L409.3 428.0L418.0 426.2L427.3 423.2L439.0 418.2L446.1 414.0L453.6 408.5L456.7 405.3L458.3 403.0L459.5 400.5L459.9 397.6L459.0 393.2L457.6 390.8L454.7 387.6L451.3 384.6L446.1 381.0L439.0 376.8L423.7 370.5L413.8 367.8L405.0 366.4L395.5 366.2L387.7 367.0L379.0 368.8L369.7 371.8L358.0 376.8Z" fill="#ffff74" fill-rule="evenodd"/>
<path d="M267.2 375.4L275.7 370.8L285.1 366.2L313.9 354.3L337.2 339.6L346.1 334.8L355.7 330.3L366.0 326.2L376.0 323.0L388.2 319.9L398.9 318.0L409.4 320.0L421.6 323.2L432.7 326.9L444.6 331.8L461.2 340.5L483.1 354.3L505.3 363.3L518.2 369.2L530.2 375.6L539.5 381.9L548.3 389.8L552.5 394.8L554.2 397.7L550.2 403.0L544.4 409.0L538.1 414.1L529.8 419.6L521.3 424.2L511.9 428.8L483.1 440.7L459.8 455.4L450.9 460.2L441.3 464.7L431.0 468.8L421.0 472.0L408.8 475.1L398.1 477.0L387.6 475.0L375.4 471.8L364.3 468.1L352.4 463.2L335.8 454.5L313.9 440.7L291.7 431.7L278.8 425.8L266.8 419.4L257.5 413.1L248.7 405.2L244.5 400.2L242.8 397.3L246.8 392.0L252.6 386.0L258.9 380.9ZM347.8 381.0L340.5 386.6L337.5 389.8L336.0 392.2L335.0 394.8L334.6 397.3L335.0 400.2L336.0 402.8L338.4 406.3L341.6 409.4L351.8 416.6L356.1 419.2L359.3 420.6L373.3 426.0L383.5 428.6L393.2 429.9L402.2 430.0L411.3 429.0L421.7 426.6L432.6 422.7L440.9 419.2L449.2 414.0L456.5 408.4L459.5 405.2L461.0 402.8L462.0 400.2L462.4 397.7L462.0 394.8L461.0 392.2L458.6 388.7L455.4 385.6L445.2 378.4L440.9 375.8L437.7 374.4L423.7 369.0L413.5 366.4L403.8 365.1L394.8 365.0L385.7 366.0L375.3 368.4L364.4 372.3L356.1 375.8Z" fill="#ffff9b" fill-rule="evenodd"/>
<path d="M268.6 379.4L277.1 374.6L288.5 369.5L299.0 365.5L321.4 358.1L334.5 347.6L342.2 342.2L352.2 336.3L361.6 331.8L372.1 327.8L381.3 325.0L392.5 322.4L397.2 321.5L399.8 321.5L409.8 323.5L421.1 326.6L430.2 329.7L438.6 333.2L447.8 337.9L456.1 343.1L462.5 347.6L475.6 358.1L498.2 365.5L510.7 370.4L522.9 376.2L533.9 383.1L539.7 387.9L543.4 391.8L547.3 396.8L547.3 398.2L543.4 403.2L539.7 407.1L535.1 411.0L528.4 415.6L519.9 420.4L508.5 425.5L498.0 429.5L475.6 436.9L462.5 447.4L454.8 452.8L444.8 458.7L435.4 463.2L424.9 467.2L415.7 470.0L404.5 472.6L399.8 473.5L397.2 473.5L387.2 471.5L375.9 468.4L366.8 465.3L358.4 461.8L349.2 457.1L340.9 451.9L334.5 447.4L321.4 436.9L298.8 429.5L286.3 424.6L274.1 418.8L263.1 411.9L257.3 407.1L253.6 403.2L249.7 398.2L249.7 396.8L253.6 391.8L257.3 387.9L261.9 384.0ZM349.4 377.1L340.6 383.6L335.4 388.8L332.7 393.6L332.0 396.4L332.0 398.6L333.2 402.7L336.4 407.3L343.0 413.3L353.2 420.6L367.5 425.8L379.2 429.2L390.9 431.1L400.7 431.4L411.1 430.5L423.9 427.6L443.8 420.6L447.6 417.9L456.4 411.4L461.6 406.2L464.3 401.4L465.0 398.6L465.0 396.4L463.8 392.3L460.6 387.7L454.0 381.7L443.8 374.4L429.5 369.2L417.8 365.8L406.1 363.9L396.3 363.6L385.9 364.5L373.1 367.4L353.2 374.4Z" fill="#ffffc3" fill-rule="evenodd"/>
<path d="M270.5 384.7L278.3 379.9L288.0 375.5L299.5 371.4L312.2 368.1L321.1 366.7L327.0 366.8L336.9 368.0L342.7 369.7L345.7 371.3L344.8 373.3L336.9 381.7L333.3 386.1L330.3 390.8L328.9 394.8L328.7 398.7L329.3 401.6L331.7 406.6L334.2 410.0L344.8 421.7L345.7 423.7L342.7 425.3L336.9 427.0L332.2 427.8L324.2 428.3L317.1 427.8L302.7 424.5L288.0 419.5L278.3 415.1L270.0 410.0L263.1 404.1L258.5 397.9L258.8 396.5L262.2 392.0L265.2 388.9ZM353.8 342.2L362.5 336.9L372.3 332.5L381.8 329.4L393.1 326.8L399.4 326.0L409.1 327.8L417.3 330.0L429.7 334.7L436.0 337.7L441.6 341.1L451.4 348.6L456.1 353.4L457.9 355.9L458.9 358.0L458.9 359.6L457.8 363.7L456.3 366.0L453.0 369.0L449.9 370.6L445.9 370.1L429.5 366.1L416.3 363.4L406.4 362.2L397.9 361.9L390.6 362.2L380.7 363.4L367.5 366.1L351.1 370.1L347.1 370.6L344.0 369.0L340.7 366.0L338.7 362.4L338.1 359.6L338.1 358.0L339.7 355.0L343.6 350.5L347.8 346.6ZM341.3 428.2L344.0 426.0L347.1 424.4L351.1 424.9L367.5 428.9L380.7 431.6L390.6 432.8L400.9 433.1L409.0 432.6L416.3 431.6L429.5 428.9L445.9 424.9L449.9 424.4L453.0 426.0L456.3 429.0L457.8 431.3L458.9 435.4L458.9 437.0L457.9 439.1L456.1 441.6L451.4 446.4L445.5 451.2L440.2 454.8L432.9 458.8L426.4 461.8L417.3 465.0L409.3 467.1L399.4 469.0L396.6 468.8L383.6 466.1L372.3 462.5L361.0 457.3L351.5 451.2L343.4 444.4L339.7 440.0L338.1 437.0L338.1 435.4L338.7 432.6L339.9 430.1ZM451.6 372.0L451.3 371.3L452.6 370.4L456.1 369.0L464.8 367.2L475.9 366.7L484.8 368.1L498.2 371.6L512.4 376.9L523.0 382.4L527.0 385.0L531.9 389.0L535.8 393.1L538.5 397.1L538.2 398.5L534.9 402.9L529.5 408.1L521.6 413.4L514.0 417.4L503.7 421.5L490.3 425.6L481.8 427.5L475.9 428.3L467.3 428.0L460.1 427.0L454.3 425.3L451.3 423.7L452.2 421.7L460.1 413.3L465.3 406.6L467.7 401.6L468.3 397.8L467.7 393.4L465.3 388.4L460.1 381.7L452.2 373.3Z" fill="#ffffeb" fill-rule="evenodd"/>
</g>
<polygon points="31.00,397.50 398.50,209.80 766.00,397.50 398.50,585.00" fill="none" stroke="#9a30d0" stroke-width="1"/>
<path d="M216 490.5h1M218 489.5h1M220 488.5h1M222 487.5h1M224 486.5h1M226 485.5h1M228 484.5h1M230 483.5h1M232 482.5h1M234 481.5h1M236 480.5h1M238 479.5h1M240 478.5h1M242 477.5h1M244 476.5h1M246 475.5h1M248 474.5h1M250 473.5h1M252 471.5h1M254 470.5h1M256 469.5h1M258 468.5h1M260 467.5h1M262 466.5h1M264 465.5h1M266 464.5h1M268 463.5h1M270 462.5h1M272 461.5h1M274 460.5h1M276 459.5h1M278 458.5h1M280 457.5h1M282 456.5h1M284 455.5h1M286 454.5h1M288 453.5h1M290 452.5h1M292 451.5h1M294 450.5h1M296 449.5h1M298 448.5h1M300 447.5h1M302 446.5h1M304 445.5h1M306 444.5h1M308 443.5h1M310 442.5h1M312 441.5h1M314 440.5h1M316 439.5h1M318 438.5h1M320 437.5h1M322 436.5h1M324 435.5h1M326 434.5h1M328 433.5h1M330 432.5h1M332 431.5h1M334 430.5h1M336 429.5h1M338 428.5h1M340 427.5h1M342 426.5h1M344 425.5h1M346 423.5h1M348 422.5h1M350 421.5h1M352 420.5h1M354 419.5h1M356 418.5h1M358 417.5h1M360 416.5h1M362 415.5h1M364 414.5h1M366 413.5h1M368 412.5h1M370 411.5h1M372 410.5h1M374 409.5h1M376 408.5h1M378 407.5h1M380 406.5h1M382 405.5h1M384 404.5h1M386 403.5h1M388 402.5h1M390 401.5h1M392 400.5h1M394 399.5h1M396 398.5h1M398 397.5h1M400 396.5h1M402 395.5h1M404 394.5h1M406 393.5h1M408 392.5h1M410 391.5h1M412 390.5h1M414 389.5h1M416 388.5h1M418 387.5h1M420 386.5h1M422 385.5h1M424 384.5h1M426 383.5h1M428 382.5h1M430 381.5h1M432 380.5h1M434 379.5h1M436 378.5h1M438 377.5h1M440 376.5h1M442 374.5h1M444 373.5h1M446 372.5h1M448 371.5h1M450 370.5h1M452 369.5h1M454 368.5h1M456 367.5h1M458 366.5h1M460 365.5h1M462 364.5h1M464 363.5h1M466 362.5h1M468 361.5h1M470 360.5h1M472 359.5h1M474 358.5h1M476 357.5h1M478 356.5h1M480 355.5h1M482 354.5h1M484 353.5h1M486 352.5h1M488 351.5h1M490 350.5h1M492 349.5h1M494 348.5h1M496 347.5h1M498 346.5h1M500 345.5h1M502 344.5h1M504 343.5h1M506 342.5h1M508 341.5h1M510 340.5h1M512 339.5h1M514 338.5h1M516 337.5h1M518 336.5h1M520 335.5h1M522 334.5h1M524 333.5h1M526 332.5h1M528 331.5h1M530 330.5h1M532 329.5h1M534 328.5h1M536 327.5h1M538 325.5h1M540 324.5h1M542 323.5h1M544 322.5h1M546 321.5h1M548 320.5h1M550 319.5h1M552 318.5h1M554 317.5h1M556 316.5h1M558 315.5h1M560 314.5h1M562 313.5h1M564 312.5h1M566 311.5h1M568 310.5h1M570 309.5h1M572 308.5h1M574 307.5h1M576 306.5h1M578 305.5h1M580 304.5h1M582 303.5h1" stroke="#a838d8" stroke-width="1" fill="none" shape-rendering="crispEdges"/>
<path d="M216 304.5h1M218 305.5h1M220 306.5h1M222 307.5h1M224 308.5h1M226 309.5h1M228 310.5h1M230 311.5h1M232 312.5h1M234 313.5h1M236 314.5h1M238 315.5h1M240 316.5h1M242 317.5h1M244 318.5h1M246 319.5h1M248 320.5h1M250 321.5h1M252 322.5h1M254 323.5h1M256 324.5h1M258 325.5h1M260 327.5h1M262 328.5h1M264 329.5h1M266 330.5h1M268 331.5h1M270 332.5h1M272 333.5h1M274 334.5h1M276 335.5h1M278 336.5h1M280 337.5h1M282 338.5h1M284 339.5h1M286 340.5h1M288 341.5h1M290 342.5h1M292 343.5h1M294 344.5h1M296 345.5h1M298 346.5h1M300 347.5h1M302 348.5h1M304 349.5h1M306 350.5h1M308 351.5h1M310 352.5h1M312 353.5h1M314 354.5h1M316 355.5h1M318 356.5h1M320 357.5h1M322 358.5h1M324 359.5h1M326 360.5h1M328 361.5h1M330 362.5h1M332 363.5h1M334 364.5h1M336 365.5h1M338 366.5h1M340 367.5h1M342 368.5h1M344 369.5h1M346 370.5h1M348 371.5h1M350 372.5h1M352 373.5h1M354 374.5h1M356 376.5h1M358 377.5h1M360 378.5h1M362 379.5h1M364 380.5h1M366 381.5h1M368 382.5h1M370 383.5h1M372 384.5h1M374 385.5h1M376 386.5h1M378 387.5h1M380 388.5h1M382 389.5h1M384 390.5h1M386 391.5h1M388 392.5h1M390 393.5h1M392 394.5h1M394 395.5h1M396 396.5h1M398 397.5h1M400 398.5h1M402 399.5h1M404 400.5h1M406 401.5h1M408 402.5h1M410 403.5h1M412 404.5h1M414 405.5h1M416 406.5h1M418 407.5h1M420 408.5h1M422 409.5h1M424 410.5h1M426 411.5h1M428 412.5h1M430 413.5h1M432 414.5h1M434 415.5h1M436 416.5h1M438 417.5h1M440 418.5h1M442 419.5h1M444 420.5h1M446 421.5h1M448 422.5h1M450 423.5h1M452 425.5h1M454 426.5h1M456 427.5h1M458 428.5h1M460 429.5h1M462 430.5h1M464 431.5h1M466 432.5h1M468 433.5h1M470 434.5h1M472 435.5h1M474 436.5h1M476 437.5h1M478 438.5h1M480 439.5h1M482 440.5h1M484 441.5h1M486 442.5h1M488 443.5h1M490 444.5h1M492 445.5h1M494 446.5h1M496 447.5h1M498 448.5h1M500 449.5h1M502 450.5h1M504 451.5h1M506 452.5h1M508 453.5h1M510 454.5h1M512 455.5h1M514 456.5h1M516 457.5h1M518 458.5h1M520 459.5h1M522 460.5h1M524 461.5h1M526 462.5h1M528 463.5h1M530 464.5h1M532 465.5h1M534 466.5h1M536 467.5h1M538 468.5h1M540 469.5h1M542 470.5h1M544 471.5h1M546 473.5h1M548 474.5h1M550 475.5h1M552 476.5h1M554 477.5h1M556 478.5h1M558 479.5h1M560 480.5h1M562 481.5h1M564 482.5h1M566 483.5h1M568 484.5h1M570 485.5h1M572 486.5h1M574 487.5h1M576 488.5h1M578 489.5h1M580 490.5h1M582 491.5h1" stroke="#a838d8" stroke-width="1" fill="none" shape-rendering="crispEdges"/>
<line x1="398.50" y1="201.50" x2="398.50" y2="397.50" stroke="#9a30d0" stroke-width="1" shape-rendering="crispEdges" />
<line x1="214.75" y1="295.00" x2="582.25" y2="108.00" stroke="#9a30d0" stroke-width="1.6" shape-rendering="crispEdges" />
<rect x="213" y="295.0" width="2" height="392.2" fill="#9a30d0"/>
<rect x="581" y="108.0" width="2" height="195.6" fill="#9a30d0"/>
<line x1="31.00" y1="201.50" x2="398.50" y2="14.50" stroke="#2222ff" stroke-width="1.9" shape-rendering="crispEdges" stroke-linecap="round"/>
<line x1="398.50" y1="14.50" x2="766.00" y2="201.50" stroke="#2222ff" stroke-width="1.9" shape-rendering="crispEdges" stroke-linecap="round"/>
<line x1="31.00" y1="201.50" x2="398.50" y2="388.50" stroke="#2222ff" stroke-width="1.9" shape-rendering="crispEdges" stroke-linecap="round"/>
<line x1="766.00" y1="201.50" x2="398.50" y2="388.50" stroke="#2222ff" stroke-width="1.9" shape-rendering="crispEdges" stroke-linecap="round"/>
<rect x="30" y="201.5" width="2" height="236.0" fill="#2222ff"/>
<rect x="765" y="201.5" width="2" height="206.0" fill="#2222ff"/>
<line x1="31.00" y1="437.50" x2="31.00" y2="593.70" stroke="#2222ff" stroke-width="1.3" shape-rendering="crispEdges" stroke-dasharray="21 1.5"/>
<line x1="766.00" y1="407.50" x2="766.00" y2="593.70" stroke="#2222ff" stroke-width="1.3" shape-rendering="crispEdges" stroke-dasharray="21 1.5"/>
<rect x="397.5" y="388.5" width="2" height="392.29999999999995" fill="#2222ff"/>
</svg>
<div class="lg">
<div class="hl" style="top:24px"></div><div class="hl" style="top:50px"></div><div class="hl" style="top:246px"></div>
<div class="t" style="left:13px;top:3px">EMagTotal</div>
<div class="t" style="left:13px;top:29px">Type: Linear</div>
<div class="cb" style="background:linear-gradient(to bottom,#ffffff 0%,#ffff00 10%,#ffc834 20%,#ff9460 30%,#ff5c96 40%,#cd23e4 50%,#7800ff 60%,#2d00ff 70%,#0000cd 80%,#000069 90%,#000000 100%)"></div>
<div class="n" style="top:53.8px">490</div>
<div class="n" style="top:70.8px">441</div>
<div class="n" style="top:87.8px">392</div>
<div class="n" style="top:104.8px">343</div>
<div class="n" style="top:121.8px">294</div>
<div class="n" style="top:138.8px">245</div>
<div class="n" style="top:155.8px">196</div>
<div class="n" style="top:172.8px">147</div>
<div class="n" style="top:189.8px">98</div>
<div class="n" style="top:206.8px">49</div>
<div class="n" style="top:223.8px">0</div>
<div class="t" style="left:13.5px;top:250px;word-spacing:-1.5px">Max: 491</div>
<div class="t" style="left:13.5px;top:267px;word-spacing:-1.5px">Min: 0</div>
<div class="t" style="left:13.5px;top:284px;word-spacing:-1.5px">Units: V/m</div>
<div class="t" style="left:13.5px;top:301px;word-spacing:-1.5px">Mean: 244</div>
<div class="t" style="left:13.5px;top:318px;word-spacing:-1.5px">STD: 177</div>
</div>
</div></body></html>
